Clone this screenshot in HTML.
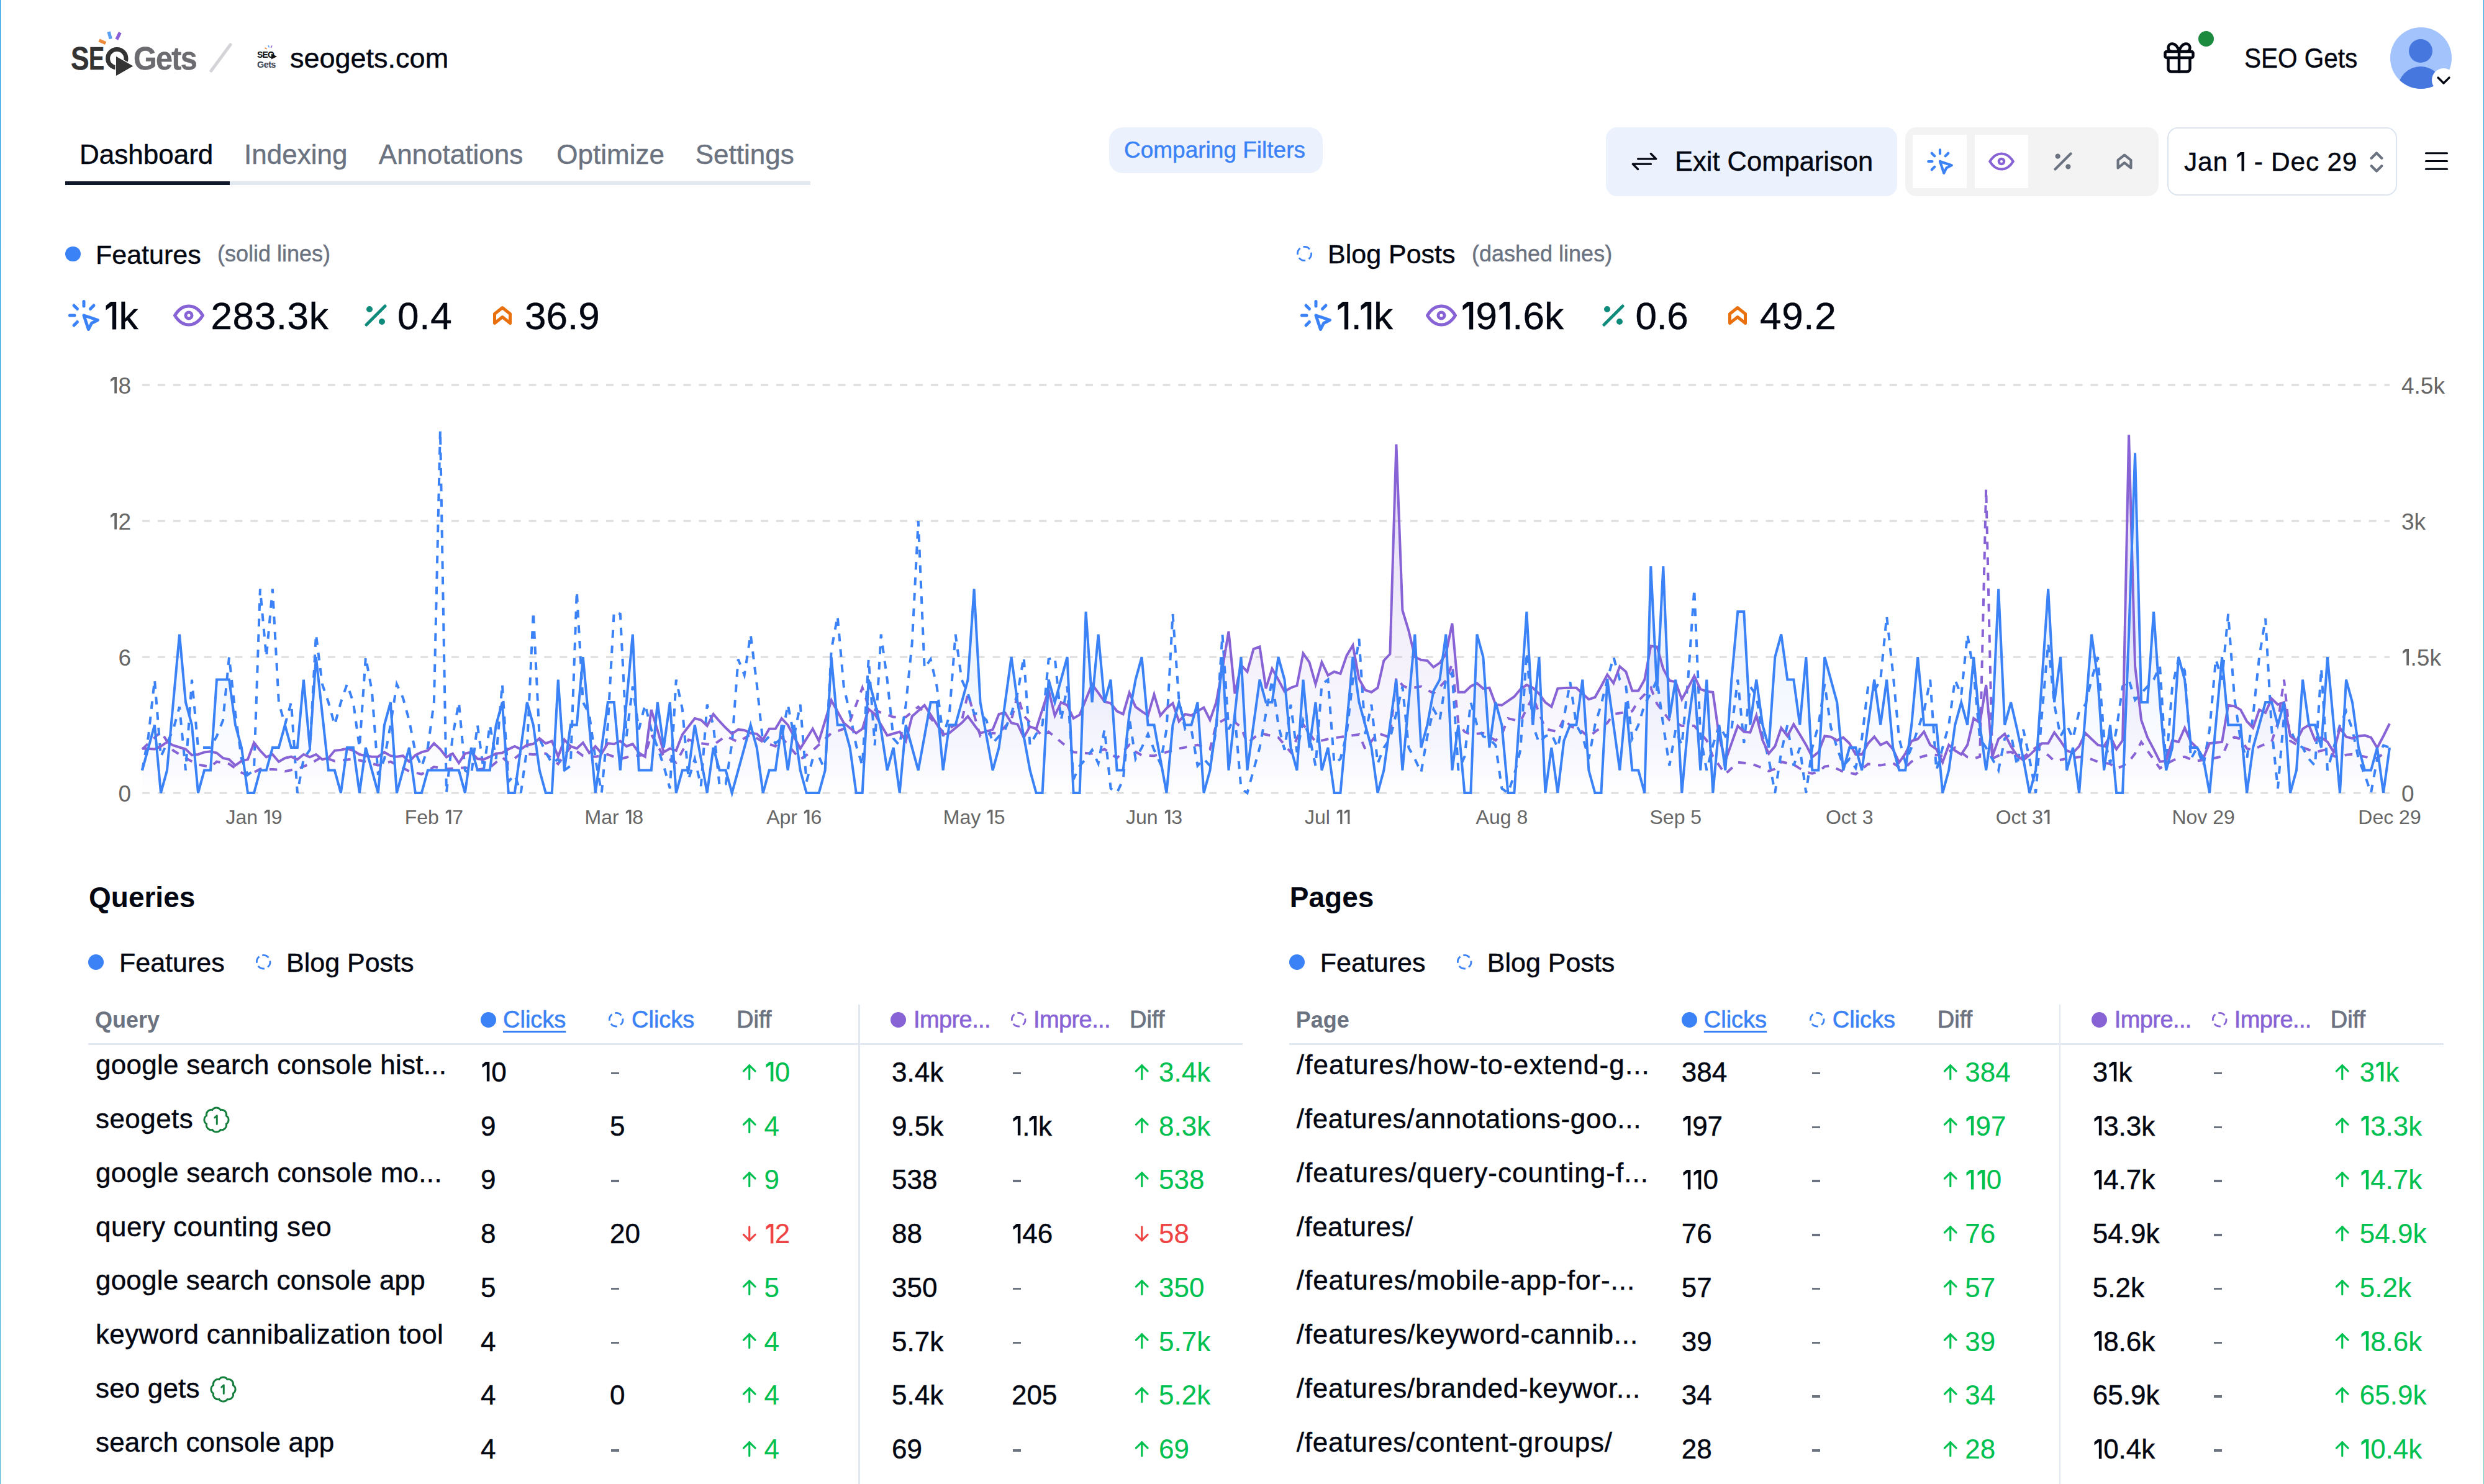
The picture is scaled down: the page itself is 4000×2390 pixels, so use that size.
<!DOCTYPE html>
<html><head><meta charset="utf-8"><title>SEO Gets Dashboard</title>
<style>
html,body{margin:0;padding:0;background:#fff;}
body{width:4000px;height:2390px;position:relative;overflow:hidden;font-family:"Liberation Sans", sans-serif;}
.t{position:absolute;white-space:pre;-webkit-text-stroke:0.45px currentColor;}
</style></head><body>
<div style="position:absolute;left:0;top:0;width:1.3px;height:2390px;background:linear-gradient(#0a93e6,#1aa0dc 50%,#45b5d5)"></div>
<div style="position:absolute;left:3998.7px;top:0;width:1.3px;height:2390px;background:linear-gradient(#1a9fe0,#3bb3d0 50%,#6ecac0)"></div>
<div class="t" style="left:114.0px;top:69.4px;font-size:51px;line-height:51px;color:#333333;font-weight:700;letter-spacing:0px;transform:scaleX(0.87);transform-origin:0 0">S</div>
<div class="t" style="left:143.0px;top:69.4px;font-size:51px;line-height:51px;color:#333333;font-weight:700;letter-spacing:0px;transform:scaleX(0.74);transform-origin:0 0">E</div>
<svg style="position:absolute;left:160.0px;top:40.0px;overflow:visible;" width="70" height="90" viewBox="0 0 70 90">
<circle cx="28.3" cy="54.2" r="14.7" fill="none" stroke="#333" stroke-width="7"/>
<path d="M26.2 49.6 L55.8 66.4 L26.2 83.3 Z" fill="#333" stroke="#fff" stroke-width="1.5" stroke-linejoin="round"/>
<line x1="-0.4" y1="24.8" x2="10.2" y2="29.7" stroke="#ee8a3c" stroke-width="5.3" stroke-linecap="butt"/>
<line x1="15.1" y1="11.1" x2="18.2" y2="22.6" stroke="#5aa0f8" stroke-width="5.3" stroke-linecap="butt"/>
<line x1="33.3" y1="12.4" x2="27.9" y2="23.5" stroke="#8a5fd8" stroke-width="5.3" stroke-linecap="butt"/>
</svg>
<div class="t" style="left:215.0px;top:69.4px;font-size:51px;line-height:51px;color:#6b6b70;font-weight:700;letter-spacing:-1.8px;transform:scaleX(0.95);transform-origin:0 0">Gets</div>
<svg style="position:absolute;left:330.0px;top:60.0px;overflow:visible;" width="60" height="70" viewBox="0 0 60 70"><line x1="10" y1="54" x2="41" y2="12" stroke="#d4d4d8" stroke-width="5" stroke-linecap="round"/></svg>
<div class="t" style="left:414.0px;top:81.1px;font-size:14px;line-height:14px;color:#111;font-weight:700;letter-spacing:-0.8px;-webkit-text-stroke:0">SEO</div>
<div class="t" style="left:414.0px;top:96.5px;font-size:14.5px;line-height:14.5px;color:#3f4450;font-weight:700;letter-spacing:-0.6px;-webkit-text-stroke:0">Gets</div>
<svg style="position:absolute;left:405.0px;top:65.0px;overflow:visible;" width="50" height="50" viewBox="0 0 50 50"><path d="M32 21.5 L41 26 L32 30.5Z" fill="#111"/><line x1="21.5" y1="12" x2="24.5" y2="14" stroke="#ee8a3c" stroke-width="1.6"/><line x1="27" y1="8" x2="28.5" y2="11.5" stroke="#5aa0f8" stroke-width="1.6"/><line x1="33" y1="8.5" x2="31.5" y2="12" stroke="#8a5fd8" stroke-width="1.6"/></svg>
<div class="t" style="left:467.0px;top:71.4px;font-size:45px;line-height:45px;color:#030712;font-weight:400;letter-spacing:0px;">seogets.com</div>
<svg style="position:absolute;left:3478.5px;top:63.0px;overflow:visible;" width="60" height="60" viewBox="0 0 24 24"><g fill="none" stroke="#030712" stroke-width="1.8" stroke-linecap="round" stroke-linejoin="round"><path d="M3 9a1 1 0 0 1 1 -1h16a1 1 0 0 1 1 1v2a1 1 0 0 1 -1 1h-16a1 1 0 0 1 -1 -1z"/><path d="M12 8l0 13"/><path d="M19 12v7a2 2 0 0 1 -2 2h-10a2 2 0 0 1 -2 -2v-7"/><path d="M7.5 8a2.5 2.5 0 0 1 0 -5a4.8 8 0 0 1 4.5 5a4.8 8 0 0 1 4.5 -5a2.5 2.5 0 0 1 0 5"/></g></svg>
<div style="position:absolute;left:3539.5px;top:49.5px;width:25.0px;height:25.0px;border-radius:50%;background:#1b8a3f"></div>
<div class="t" style="left:3614.0px;top:70.9px;font-size:45px;line-height:45px;color:#030712;font-weight:400;letter-spacing:0px;transform:scaleX(0.9);transform-origin:0 0">SEO Gets</div>
<svg style="position:absolute;left:3849.0px;top:43.5px;overflow:visible;" width="100" height="100" viewBox="0 0 100 100">
<defs><clipPath id="av"><circle cx="49.5" cy="49.5" r="49.5"/></clipPath></defs>
<circle cx="49.5" cy="49.5" r="49.5" fill="#a3c3fd"/>
<g clip-path="url(#av)"><circle cx="49" cy="38" r="19" fill="#4677df"/><ellipse cx="49" cy="98" rx="36" ry="35" fill="#4677df"/></g>
<circle cx="86" cy="85" r="19" fill="#fff"/>
<path d="M77 81 L86 90 L95 81" fill="none" stroke="#030712" stroke-width="3.2" stroke-linecap="round" stroke-linejoin="round"/>
</svg>
<div class="t" style="left:128.0px;top:226.7px;font-size:44px;line-height:44px;color:#030712;font-weight:400;letter-spacing:0px;">Dashboard</div>
<div class="t" style="left:393.0px;top:226.7px;font-size:44px;line-height:44px;color:#6b7280;font-weight:400;letter-spacing:0px;">Indexing</div>
<div class="t" style="left:609.8px;top:226.7px;font-size:44px;line-height:44px;color:#6b7280;font-weight:400;letter-spacing:0px;">Annotations</div>
<div class="t" style="left:896.3px;top:226.7px;font-size:44px;line-height:44px;color:#6b7280;font-weight:400;letter-spacing:0px;">Optimize</div>
<div class="t" style="left:1119.7px;top:226.7px;font-size:44px;line-height:44px;color:#6b7280;font-weight:400;letter-spacing:0px;">Settings</div>
<div style="position:absolute;left:105.0px;top:291.5px;width:1200.3px;height:6.0px;background:#e2e8f0;"></div>
<div style="position:absolute;left:105.0px;top:291.5px;width:265.0px;height:6.0px;background:#0f172a;"></div>
<div style="position:absolute;left:1786.0px;top:204.5px;width:344.0px;height:74.5px;background:#ebf2fd;border-radius:22px"></div>
<div class="t" style="left:1810.0px;top:223.2px;font-size:37px;line-height:37px;color:#3b82f6;font-weight:400;letter-spacing:0px;">Comparing Filters</div>
<div style="position:absolute;left:2585.8px;top:204.5px;width:469.2px;height:111.0px;background:#ebf1fd;border-radius:18px"></div>
<svg style="position:absolute;left:2623.3px;top:235.0px;overflow:visible;" width="50" height="50" viewBox="0 0 24 24"><g fill="none" stroke="#030712" stroke-width="1.6" stroke-linecap="round" stroke-linejoin="round"><path d="M7 10h14l-4 -4"/><path d="M17 14h-14l4 4"/></g></svg>
<div class="t" style="left:2697.0px;top:239.4px;font-size:43.5px;line-height:43.5px;color:#030712;font-weight:400;letter-spacing:0px;">Exit Comparison</div>
<div style="position:absolute;left:3067.5px;top:204.5px;width:408.8px;height:111.0px;background:#f3f3f4;border-radius:18px"></div>
<div style="position:absolute;left:3080.0px;top:217.0px;width:87.0px;height:86.0px;background:#ffffff;"></div>
<div style="position:absolute;left:3179.5px;top:217.0px;width:86.2px;height:86.0px;background:#ffffff;"></div>
<svg style="position:absolute;left:3098.5px;top:235.0px;overflow:visible;" width="50" height="50" viewBox="0 0 24 24"><g fill="none" stroke="#3b82f6" stroke-width="2" stroke-linecap="round" stroke-linejoin="round"><path d="M3 12l3 0"/><path d="M12 3l0 3"/><path d="M7.8 7.8l-2.2 -2.2"/><path d="M16.2 7.8l2.2 -2.2"/><path d="M7.8 16.2l-2.2 2.2"/><path d="M12 12l9 3l-4 2l-2 4l-3 -9"/></g></svg>
<svg style="position:absolute;left:3197.6px;top:235.0px;overflow:visible;" width="50" height="50" viewBox="0 0 24 24"><g fill="none" stroke="#8763d5" stroke-width="2" stroke-linecap="round" stroke-linejoin="round"><path d="M10 12a2 2 0 1 0 4 0a2 2 0 0 0 -4 0"/><path d="M21 12c-2.4 4 -5.4 6 -9 6c-3.6 0 -6.6 -2 -9 -6c2.4 -4 5.4 -6 9 -6c3.6 0 6.6 2 9 6"/></g></svg>
<svg style="position:absolute;left:3297.0px;top:235.0px;overflow:visible;" width="50" height="50" viewBox="0 0 24 24"><g fill="none" stroke="#6b7280" stroke-width="2" stroke-linecap="round" stroke-linejoin="round"><path d="M6 18l12 -12"/><circle cx="8" cy="8" r="1" fill="#6b7280"/><circle cx="16" cy="16" r="1" fill="#6b7280"/></g></svg>
<svg style="position:absolute;left:3396.0px;top:235.0px;overflow:visible;" width="50" height="50" viewBox="0 0 24 24"><g fill="none" stroke="#6b7280" stroke-width="2" stroke-linecap="round" stroke-linejoin="round"><path d="M17 11v6l-5 -4l-5 4v-6l5 -4z"/></g></svg>
<div style="position:absolute;left:3489.5px;top:205px;width:370.75px;height:110px;box-sizing:border-box;border:2.5px solid #dde5ef;border-radius:17px;background:#fff"></div>
<div class="t" style="left:3517.0px;top:240.3px;font-size:42.5px;line-height:42.5px;color:#030712;font-weight:400;letter-spacing:0.75px;">Jan <svg width="16.74" height="30.43" style="vertical-align:baseline;overflow:visible"><polygon points="7.75,0.00 13.85,0.00 13.85,30.43 9.51,30.43 9.51,4.26 2.43,9.25 2.43,4.26" fill="currentColor"/></svg> - Dec 29</div>
<svg style="position:absolute;left:3802.3px;top:236.3px;overflow:visible;" width="50" height="50" viewBox="0 0 24 24"><g fill="none" stroke="#6b7280" stroke-width="2" stroke-linecap="round" stroke-linejoin="round"><path d="M8 9l4 -4l4 4"/><path d="M16 15l-4 4l-4 -4"/></g></svg>
<svg style="position:absolute;left:3898.0px;top:234.2px;overflow:visible;" width="51" height="51" viewBox="0 0 24 24"><g fill="none" stroke="#030712" stroke-width="1.5" stroke-linecap="round" stroke-linejoin="round"><path d="M4 6l16 0"/><path d="M4 12l16 0"/><path d="M4 18l16 0"/></g></svg>
<div style="position:absolute;left:105.0px;top:396.7px;width:24.6px;height:24.6px;border-radius:50%;background:#3b82f6"></div>
<div class="t" style="left:154.0px;top:389.1px;font-size:43px;line-height:43px;color:#030712;font-weight:400;letter-spacing:0px;">Features</div>
<div class="t" style="left:350.0px;top:390.5px;font-size:36px;line-height:36px;color:#6b7280;font-weight:400;letter-spacing:0px;">(solid lines)</div>
<svg style="position:absolute;left:2084.7px;top:393.2px;overflow:visible;" width="31.0" height="31.0" viewBox="0 0 31.0 31.0"><circle cx="15.5" cy="15.5" r="11.1" fill="none" stroke="#3b82f6" stroke-width="2.8" stroke-dasharray="11.51 5.93" transform="rotate(-100 15.5 15.5)"/></svg>
<div class="t" style="left:2138.0px;top:388.1px;font-size:43px;line-height:43px;color:#030712;font-weight:400;letter-spacing:0px;">Blog Posts</div>
<div class="t" style="left:2370.0px;top:390.5px;font-size:36px;line-height:36px;color:#6b7280;font-weight:400;letter-spacing:0px;">(dashed lines)</div>
<svg style="position:absolute;left:105.0px;top:477.5px;overflow:visible;" width="60" height="60" viewBox="0 0 24 24"><g fill="none" stroke="#3b82f6" stroke-width="2" stroke-linecap="round" stroke-linejoin="round"><path d="M3 12l3 0"/><path d="M12 3l0 3"/><path d="M7.8 7.8l-2.2 -2.2"/><path d="M16.2 7.8l2.2 -2.2"/><path d="M7.8 16.2l-2.2 2.2"/><path d="M12 12l9 3l-4 2l-2 4l-3 -9"/></g></svg>
<div class="t" style="left:167.0px;top:478.0px;font-size:62px;line-height:62px;color:#030712;font-weight:400;letter-spacing:0px;"><svg width="24.42" height="44.39" style="vertical-align:baseline;overflow:visible"><polygon points="11.31,0.00 20.20,0.00 20.20,44.39 13.87,44.39 13.87,6.21 3.55,13.50 3.55,6.21" fill="currentColor"/></svg>k</div>
<svg style="position:absolute;left:274.0px;top:477.5px;overflow:visible;" width="60" height="60" viewBox="0 0 24 24"><g fill="none" stroke="#8763d5" stroke-width="2" stroke-linecap="round" stroke-linejoin="round"><path d="M10 12a2 2 0 1 0 4 0a2 2 0 0 0 -4 0"/><path d="M21 12c-2.4 4 -5.4 6 -9 6c-3.6 0 -6.6 -2 -9 -6c2.4 -4 5.4 -6 9 -6c3.6 0 6.6 2 9 6"/></g></svg>
<div class="t" style="left:339.5px;top:478.0px;font-size:62px;line-height:62px;color:#030712;font-weight:400;letter-spacing:0.6px;">283.3k</div>
<svg style="position:absolute;left:575.0px;top:477.5px;overflow:visible;" width="60" height="60" viewBox="0 0 24 24"><g fill="none" stroke="#0f8b7c" stroke-width="2" stroke-linecap="round" stroke-linejoin="round"><path d="M6 18l12 -12"/><circle cx="8" cy="8" r="1" fill="#0f8b7c"/><circle cx="16" cy="16" r="1" fill="#0f8b7c"/></g></svg>
<div class="t" style="left:640.0px;top:478.0px;font-size:62px;line-height:62px;color:#030712;font-weight:400;letter-spacing:0.8px;">0.4</div>
<svg style="position:absolute;left:779.0px;top:478.0px;overflow:visible;" width="60" height="60" viewBox="0 0 24 24"><g fill="none" stroke="#e8700e" stroke-width="2" stroke-linecap="round" stroke-linejoin="round"><path d="M17 11v6l-5 -4l-5 4v-6l5 -4z"/></g></svg>
<div class="t" style="left:845.0px;top:478.0px;font-size:62px;line-height:62px;color:#030712;font-weight:400;letter-spacing:0px;">36.9</div>
<svg style="position:absolute;left:2089.0px;top:477.5px;overflow:visible;" width="60" height="60" viewBox="0 0 24 24"><g fill="none" stroke="#3b82f6" stroke-width="2" stroke-linecap="round" stroke-linejoin="round"><path d="M3 12l3 0"/><path d="M12 3l0 3"/><path d="M7.8 7.8l-2.2 -2.2"/><path d="M16.2 7.8l2.2 -2.2"/><path d="M7.8 16.2l-2.2 2.2"/><path d="M12 12l9 3l-4 2l-2 4l-3 -9"/></g></svg>
<div class="t" style="left:2151.0px;top:478.0px;font-size:62px;line-height:62px;color:#030712;font-weight:400;letter-spacing:-5px;"><svg width="24.42" height="44.39" style="vertical-align:baseline;overflow:visible"><polygon points="11.31,0.00 20.20,0.00 20.20,44.39 13.87,44.39 13.87,6.21 3.55,13.50 3.55,6.21" fill="currentColor"/></svg>.<svg width="24.42" height="44.39" style="vertical-align:baseline;overflow:visible"><polygon points="11.31,0.00 20.20,0.00 20.20,44.39 13.87,44.39 13.87,6.21 3.55,13.50 3.55,6.21" fill="currentColor"/></svg>k</div>
<svg style="position:absolute;left:2290.5px;top:477.5px;overflow:visible;" width="60" height="60" viewBox="0 0 24 24"><g fill="none" stroke="#8763d5" stroke-width="2" stroke-linecap="round" stroke-linejoin="round"><path d="M10 12a2 2 0 1 0 4 0a2 2 0 0 0 -4 0"/><path d="M21 12c-2.4 4 -5.4 6 -9 6c-3.6 0 -6.6 -2 -9 -6c2.4 -4 5.4 -6 9 -6c3.6 0 6.6 2 9 6"/></g></svg>
<div class="t" style="left:2352.0px;top:478.0px;font-size:62px;line-height:62px;color:#030712;font-weight:400;letter-spacing:0px;"><svg width="24.42" height="44.39" style="vertical-align:baseline;overflow:visible"><polygon points="11.31,0.00 20.20,0.00 20.20,44.39 13.87,44.39 13.87,6.21 3.55,13.50 3.55,6.21" fill="currentColor"/></svg>9<svg width="24.42" height="44.39" style="vertical-align:baseline;overflow:visible"><polygon points="11.31,0.00 20.20,0.00 20.20,44.39 13.87,44.39 13.87,6.21 3.55,13.50 3.55,6.21" fill="currentColor"/></svg>.6k</div>
<svg style="position:absolute;left:2567.5px;top:477.5px;overflow:visible;" width="60" height="60" viewBox="0 0 24 24"><g fill="none" stroke="#0f8b7c" stroke-width="2" stroke-linecap="round" stroke-linejoin="round"><path d="M6 18l12 -12"/><circle cx="8" cy="8" r="1" fill="#0f8b7c"/><circle cx="16" cy="16" r="1" fill="#0f8b7c"/></g></svg>
<div class="t" style="left:2633.5px;top:478.0px;font-size:62px;line-height:62px;color:#030712;font-weight:400;letter-spacing:-0.5px;">0.6</div>
<svg style="position:absolute;left:2767.6px;top:478.0px;overflow:visible;" width="60" height="60" viewBox="0 0 24 24"><g fill="none" stroke="#e8700e" stroke-width="2" stroke-linecap="round" stroke-linejoin="round"><path d="M17 11v6l-5 -4l-5 4v-6l5 -4z"/></g></svg>
<div class="t" style="left:2834.0px;top:478.0px;font-size:62px;line-height:62px;color:#030712;font-weight:400;letter-spacing:0.7px;">49.2</div>
<div class="t" style="left:0;width:211px;text-align:right;top:602.7px;font-size:37px;line-height:37px;color:#666;-webkit-text-stroke:0"><svg width="14.57" height="26.49" style="vertical-align:baseline;overflow:visible"><polygon points="6.75,0.00 12.05,0.00 12.05,26.49 8.28,26.49 8.28,3.71 2.12,8.05 2.12,3.71" fill="currentColor"/></svg>8</div>
<div class="t" style="left:3867.0px;top:602.7px;font-size:37px;line-height:37px;color:#666;font-weight:400;letter-spacing:0px;-webkit-text-stroke:0">4.5k</div>
<div class="t" style="left:0;width:211px;text-align:right;top:821.7px;font-size:37px;line-height:37px;color:#666;-webkit-text-stroke:0"><svg width="14.57" height="26.49" style="vertical-align:baseline;overflow:visible"><polygon points="6.75,0.00 12.05,0.00 12.05,26.49 8.28,26.49 8.28,3.71 2.12,8.05 2.12,3.71" fill="currentColor"/></svg>2</div>
<div class="t" style="left:3867.0px;top:821.7px;font-size:37px;line-height:37px;color:#666;font-weight:400;letter-spacing:0px;-webkit-text-stroke:0">3k</div>
<div class="t" style="left:0;width:211px;text-align:right;top:1040.7px;font-size:37px;line-height:37px;color:#666;-webkit-text-stroke:0">6</div>
<div class="t" style="left:3867.0px;top:1040.7px;font-size:37px;line-height:37px;color:#666;font-weight:400;letter-spacing:0px;-webkit-text-stroke:0"><svg width="14.57" height="26.49" style="vertical-align:baseline;overflow:visible"><polygon points="6.75,0.00 12.05,0.00 12.05,26.49 8.28,26.49 8.28,3.71 2.12,8.05 2.12,3.71" fill="currentColor"/></svg>.5k</div>
<div class="t" style="left:0;width:211px;text-align:right;top:1259.8px;font-size:37px;line-height:37px;color:#666;-webkit-text-stroke:0">0</div>
<div class="t" style="left:3867.0px;top:1259.8px;font-size:37px;line-height:37px;color:#666;font-weight:400;letter-spacing:0px;-webkit-text-stroke:0">0</div>
<div class="t" style="left:309.0px;width:200px;text-align:center;top:1299.9px;font-size:32px;line-height:32px;color:#666;-webkit-text-stroke:0">Jan <svg width="12.60" height="22.91" style="vertical-align:baseline;overflow:visible"><polygon points="5.84,0.00 10.42,0.00 10.42,22.91 7.16,22.91 7.16,3.21 1.83,6.97 1.83,3.21" fill="currentColor"/></svg>9</div>
<div class="t" style="left:598.9px;width:200px;text-align:center;top:1299.9px;font-size:32px;line-height:32px;color:#666;-webkit-text-stroke:0">Feb <svg width="12.60" height="22.91" style="vertical-align:baseline;overflow:visible"><polygon points="5.84,0.00 10.42,0.00 10.42,22.91 7.16,22.91 7.16,3.21 1.83,6.97 1.83,3.21" fill="currentColor"/></svg>7</div>
<div class="t" style="left:888.8px;width:200px;text-align:center;top:1299.9px;font-size:32px;line-height:32px;color:#666;-webkit-text-stroke:0">Mar <svg width="12.60" height="22.91" style="vertical-align:baseline;overflow:visible"><polygon points="5.84,0.00 10.42,0.00 10.42,22.91 7.16,22.91 7.16,3.21 1.83,6.97 1.83,3.21" fill="currentColor"/></svg>8</div>
<div class="t" style="left:1178.7px;width:200px;text-align:center;top:1299.9px;font-size:32px;line-height:32px;color:#666;-webkit-text-stroke:0">Apr <svg width="12.60" height="22.91" style="vertical-align:baseline;overflow:visible"><polygon points="5.84,0.00 10.42,0.00 10.42,22.91 7.16,22.91 7.16,3.21 1.83,6.97 1.83,3.21" fill="currentColor"/></svg>6</div>
<div class="t" style="left:1468.6px;width:200px;text-align:center;top:1299.9px;font-size:32px;line-height:32px;color:#666;-webkit-text-stroke:0">May <svg width="12.60" height="22.91" style="vertical-align:baseline;overflow:visible"><polygon points="5.84,0.00 10.42,0.00 10.42,22.91 7.16,22.91 7.16,3.21 1.83,6.97 1.83,3.21" fill="currentColor"/></svg>5</div>
<div class="t" style="left:1758.5px;width:200px;text-align:center;top:1299.9px;font-size:32px;line-height:32px;color:#666;-webkit-text-stroke:0">Jun <svg width="12.60" height="22.91" style="vertical-align:baseline;overflow:visible"><polygon points="5.84,0.00 10.42,0.00 10.42,22.91 7.16,22.91 7.16,3.21 1.83,6.97 1.83,3.21" fill="currentColor"/></svg>3</div>
<div class="t" style="left:2038.5px;width:200px;text-align:center;top:1299.9px;font-size:32px;line-height:32px;color:#666;-webkit-text-stroke:0">Jul <svg width="12.60" height="22.91" style="vertical-align:baseline;overflow:visible"><polygon points="5.84,0.00 10.42,0.00 10.42,22.91 7.16,22.91 7.16,3.21 1.83,6.97 1.83,3.21" fill="currentColor"/></svg><svg width="12.60" height="22.91" style="vertical-align:baseline;overflow:visible"><polygon points="5.84,0.00 10.42,0.00 10.42,22.91 7.16,22.91 7.16,3.21 1.83,6.97 1.83,3.21" fill="currentColor"/></svg></div>
<div class="t" style="left:2318.4px;width:200px;text-align:center;top:1299.9px;font-size:32px;line-height:32px;color:#666;-webkit-text-stroke:0">Aug 8</div>
<div class="t" style="left:2598.3px;width:200px;text-align:center;top:1299.9px;font-size:32px;line-height:32px;color:#666;-webkit-text-stroke:0">Sep 5</div>
<div class="t" style="left:2878.2px;width:200px;text-align:center;top:1299.9px;font-size:32px;line-height:32px;color:#666;-webkit-text-stroke:0">Oct 3</div>
<div class="t" style="left:3158.2px;width:200px;text-align:center;top:1299.9px;font-size:32px;line-height:32px;color:#666;-webkit-text-stroke:0">Oct 3<svg width="12.60" height="22.91" style="vertical-align:baseline;overflow:visible"><polygon points="5.84,0.00 10.42,0.00 10.42,22.91 7.16,22.91 7.16,3.21 1.83,6.97 1.83,3.21" fill="currentColor"/></svg></div>
<div class="t" style="left:3448.1px;width:200px;text-align:center;top:1299.9px;font-size:32px;line-height:32px;color:#666;-webkit-text-stroke:0">Nov 29</div>
<div class="t" style="left:3748px;width:200px;text-align:center;top:1299.9px;font-size:32px;line-height:32px;color:#666;-webkit-text-stroke:0">Dec 29</div>
<svg style="position:absolute;left:0;top:0" width="4000" height="2390"><defs><linearGradient id="gb" x1="0" y1="0" x2="0" y2="1"><stop offset="0" stop-color="#3b82f6" stop-opacity="0.2"/><stop offset="1" stop-color="#3b82f6" stop-opacity="0.0"/></linearGradient><linearGradient id="gp" x1="0" y1="0" x2="0" y2="1"><stop offset="0" stop-color="#8763d5" stop-opacity="0.24"/><stop offset="1" stop-color="#8763d5" stop-opacity="0.0"/></linearGradient></defs><line x1="229" y1="1277.1" x2="3848" y2="1277.1" stroke="#dcdcdc" stroke-width="2.8" stroke-dasharray="12 12.9"/><line x1="229" y1="1058.1" x2="3848" y2="1058.1" stroke="#dcdcdc" stroke-width="2.8" stroke-dasharray="12 12.9"/><line x1="229" y1="839.0" x2="3848" y2="839.0" stroke="#dcdcdc" stroke-width="2.8" stroke-dasharray="12 12.9"/><line x1="229" y1="620.0" x2="3848" y2="620.0" stroke="#dcdcdc" stroke-width="2.8" stroke-dasharray="12 12.9"/><path d="M229.0 1240.6 L239.0 1204.1 L249.0 1167.6 L259.0 1277.1 L269.0 1240.6 L279.0 1131.1 L289.0 1021.6 L299.0 1131.1 L309.0 1167.6 L319.0 1277.1 L329.0 1240.6 L339.0 1240.6 L349.0 1094.6 L359.0 1094.6 L369.0 1094.6 L379.0 1167.6 L389.0 1204.1 L399.0 1277.1 L409.0 1277.1 L418.9 1240.6 L428.9 1240.6 L438.9 1204.1 L448.9 1204.1 L458.9 1167.6 L468.9 1204.1 L478.9 1204.1 L488.9 1094.6 L498.9 1204.1 L508.9 1058.1 L518.9 1149.3 L528.9 1240.6 L538.9 1240.6 L548.9 1277.1 L558.9 1204.1 L568.9 1204.1 L578.9 1277.1 L588.9 1204.1 L598.9 1240.6 L608.9 1277.1 L618.9 1167.6 L628.9 1131.1 L638.9 1277.1 L648.9 1240.6 L658.9 1204.1 L668.9 1277.1 L678.9 1277.1 L688.9 1240.6 L698.9 1240.6 L708.9 1240.6 L718.9 1240.6 L728.9 1240.6 L738.9 1240.6 L748.9 1277.1 L758.9 1204.1 L768.9 1240.6 L778.8 1240.6 L788.8 1240.6 L798.8 1167.6 L808.8 1131.1 L818.8 1277.1 L828.8 1277.1 L838.8 1204.1 L848.8 1131.1 L858.8 1167.6 L868.8 1240.6 L878.8 1277.1 L888.8 1277.1 L898.8 1094.6 L908.8 1240.6 L918.8 1167.6 L928.8 1167.6 L938.8 1058.1 L948.8 1167.6 L958.8 1277.1 L968.8 1204.1 L978.8 1131.1 L988.8 1131.1 L998.8 1240.6 L1008.8 1131.1 L1018.8 1021.6 L1028.8 1240.6 L1038.8 1240.6 L1048.8 1240.6 L1058.8 1131.1 L1068.8 1204.1 L1078.8 1131.1 L1088.8 1277.1 L1098.8 1240.6 L1108.8 1240.6 L1118.8 1167.6 L1128.8 1222.3 L1138.7 1277.1 L1148.7 1204.1 L1158.7 1240.6 L1168.7 1240.6 L1178.7 1277.1 L1188.7 1240.6 L1198.7 1204.1 L1208.7 1167.6 L1218.7 1204.1 L1228.7 1277.1 L1238.7 1240.6 L1248.7 1240.6 L1258.7 1167.6 L1268.7 1240.6 L1278.7 1167.6 L1288.7 1240.6 L1298.7 1277.1 L1308.7 1277.1 L1318.7 1277.1 L1328.7 1240.6 L1338.7 1058.1 L1348.7 1167.6 L1358.7 1167.6 L1368.7 1204.1 L1378.7 1277.1 L1388.7 1277.1 L1398.7 1094.6 L1408.7 1131.1 L1418.7 1174.9 L1428.7 1240.6 L1438.7 1204.1 L1448.7 1277.1 L1458.7 1167.6 L1468.7 1204.1 L1478.7 1240.6 L1488.7 1185.8 L1498.6 1131.1 L1508.6 1131.1 L1518.6 1240.6 L1528.6 1167.6 L1538.6 1167.6 L1548.6 1131.1 L1558.6 1094.6 L1568.6 948.5 L1578.6 1131.1 L1588.6 1185.8 L1598.6 1240.6 L1608.6 1204.1 L1618.6 1131.1 L1628.6 1058.1 L1638.6 1131.1 L1648.6 1185.8 L1658.6 1240.6 L1668.6 1277.1 L1678.6 1277.1 L1688.6 1094.6 L1698.6 1131.1 L1708.6 1094.6 L1718.6 1058.1 L1728.6 1277.1 L1738.6 1277.1 L1748.6 985.1 L1758.6 1131.1 L1768.6 1021.6 L1778.6 1131.1 L1788.6 1094.6 L1798.6 1240.6 L1808.6 1240.6 L1818.6 1149.3 L1828.6 1094.6 L1838.6 1058.1 L1848.6 1167.6 L1858.5 1167.6 L1868.5 1222.3 L1878.5 1277.1 L1888.5 1167.6 L1898.5 1131.1 L1908.5 1167.6 L1918.5 1167.6 L1928.5 1131.1 L1938.5 1277.1 L1948.5 1240.6 L1958.5 1167.6 L1968.5 1058.1 L1978.5 1240.6 L1988.5 1149.3 L1998.5 1058.1 L2008.5 1240.6 L2018.5 1167.6 L2028.5 1094.6 L2038.5 1131.1 L2048.5 1131.1 L2058.5 1058.1 L2068.5 1094.6 L2078.5 1204.1 L2088.5 1240.6 L2098.5 1094.6 L2108.5 1204.1 L2118.5 1131.1 L2128.5 1240.6 L2138.5 1204.1 L2148.5 1277.1 L2158.5 1277.1 L2168.5 1167.6 L2178.5 1058.1 L2188.5 1131.1 L2198.5 1167.6 L2208.5 1204.1 L2218.5 1277.1 L2228.4 1240.6 L2238.4 1167.6 L2248.4 1094.6 L2258.4 1240.6 L2268.4 1131.1 L2278.4 1021.6 L2288.4 1204.1 L2298.4 1167.6 L2308.4 1112.8 L2318.4 1094.6 L2328.4 1021.6 L2338.4 1240.6 L2348.4 1167.6 L2358.4 1277.1 L2368.4 1277.1 L2378.4 1021.6 L2388.4 1058.1 L2398.4 1204.1 L2408.4 1131.1 L2418.4 1167.6 L2428.4 1277.1 L2438.4 1277.1 L2448.4 1131.1 L2458.4 985.1 L2468.4 1167.6 L2478.4 1058.1 L2488.4 1277.1 L2498.4 1204.1 L2508.4 1277.1 L2518.4 1193.1 L2528.4 1167.6 L2538.4 1167.6 L2548.4 1094.6 L2558.4 1240.6 L2568.4 1277.1 L2578.4 1277.1 L2588.3 1094.6 L2598.3 1167.6 L2608.3 1240.6 L2618.3 1131.1 L2628.3 1240.6 L2638.3 1240.6 L2648.3 1277.1 L2658.3 912.0 L2668.3 1112.8 L2678.3 912.0 L2688.3 1156.6 L2698.3 1094.6 L2708.3 1277.1 L2718.3 1167.6 L2728.3 1094.6 L2738.3 1240.6 L2748.3 1094.6 L2758.3 1277.1 L2768.3 1167.6 L2778.3 1240.6 L2788.3 1094.6 L2798.3 985.1 L2808.3 985.1 L2818.3 1167.6 L2828.3 1094.6 L2838.3 1167.6 L2848.3 1204.1 L2858.3 1058.1 L2868.3 1021.6 L2878.3 1094.6 L2888.3 1094.6 L2898.3 1167.6 L2908.3 1058.1 L2918.3 1240.6 L2928.3 1240.6 L2938.3 1058.1 L2948.2 1094.6 L2958.2 1131.1 L2968.2 1240.6 L2978.2 1204.1 L2988.2 1204.1 L2998.2 1240.6 L3008.2 1167.6 L3018.2 1094.6 L3028.2 1167.6 L3038.2 1094.6 L3048.2 1204.1 L3058.2 1240.6 L3068.2 1240.6 L3078.2 1167.6 L3088.2 1058.1 L3098.2 1167.6 L3108.2 1167.6 L3118.2 1167.6 L3128.2 1277.1 L3138.2 1240.6 L3148.2 1167.6 L3158.2 1131.1 L3168.2 1167.6 L3178.2 1058.1 L3188.2 1167.6 L3198.2 1240.6 L3208.2 1167.6 L3218.2 948.5 L3228.2 1167.6 L3238.2 1131.1 L3248.2 1174.9 L3258.2 1222.3 L3268.2 1277.1 L3278.2 1240.6 L3288.2 1094.6 L3298.2 948.5 L3308.1 1131.1 L3318.1 1058.1 L3328.1 1240.6 L3338.1 1204.1 L3348.1 1277.1 L3358.1 1149.3 L3368.1 1021.6 L3378.1 1094.6 L3388.1 1240.6 L3398.1 1167.6 L3408.1 1277.1 L3418.1 1277.1 L3428.1 1021.6 L3438.1 729.5 L3448.1 1131.1 L3458.1 1131.1 L3468.1 985.1 L3478.1 1131.1 L3488.1 1240.6 L3498.1 1204.1 L3508.1 1058.1 L3518.1 1094.6 L3528.1 1204.1 L3538.1 1204.1 L3548.1 1222.3 L3558.1 1277.1 L3568.1 1167.6 L3578.1 1058.1 L3588.1 1167.6 L3598.1 1167.6 L3608.1 1167.6 L3618.1 1277.1 L3628.1 1204.1 L3638.1 1167.6 L3648.1 1131.1 L3658.1 1131.1 L3668.0 1167.6 L3678.0 1131.1 L3688.0 1277.1 L3698.0 1240.6 L3708.0 1094.6 L3718.0 1167.6 L3728.0 1167.6 L3738.0 1204.1 L3748.0 1058.1 L3758.0 1167.6 L3768.0 1277.1 L3778.0 1094.6 L3788.0 1131.1 L3798.0 1204.1 L3808.0 1240.6 L3818.0 1240.6 L3828.0 1204.1 L3838.0 1277.1 L3848.0 1204.1 L3848 1277.1 L229 1277.1 Z" fill="url(#gb)"/><path d="M229.0 1205.5 L239.0 1206.1 L249.0 1206.6 L259.0 1201.9 L269.0 1195.0 L279.0 1200.4 L289.0 1203.5 L299.0 1206.6 L309.0 1216.1 L319.0 1215.0 L329.0 1211.4 L339.0 1210.3 L349.0 1212.5 L359.0 1220.9 L369.0 1223.1 L379.0 1232.6 L389.0 1225.6 L399.0 1223.1 L409.0 1196.1 L418.9 1208.8 L428.9 1219.4 L438.9 1215.0 L448.9 1226.7 L458.9 1220.9 L468.9 1218.7 L478.9 1223.1 L488.9 1215.0 L498.9 1219.4 L508.9 1215.0 L518.9 1223.1 L528.9 1220.9 L538.9 1208.8 L548.9 1207.7 L558.9 1205.5 L568.9 1208.8 L578.9 1215.0 L588.9 1217.2 L598.9 1218.7 L608.9 1218.7 L618.9 1211.4 L628.9 1217.2 L638.9 1218.7 L648.9 1217.2 L658.9 1226.7 L668.9 1216.1 L678.9 1211.4 L688.9 1208.8 L698.9 1197.2 L708.9 1206.6 L718.9 1219.4 L728.9 1213.6 L738.9 1228.9 L748.9 1213.6 L758.9 1211.4 L768.9 1222.0 L778.8 1223.1 L788.8 1218.7 L798.8 1213.6 L808.8 1212.5 L818.8 1206.6 L828.8 1201.9 L838.8 1206.6 L848.8 1199.7 L858.8 1198.2 L868.8 1189.1 L878.8 1197.2 L888.8 1193.5 L898.8 1218.7 L908.8 1191.3 L918.8 1201.9 L928.8 1205.5 L938.8 1196.1 L948.8 1212.5 L958.8 1201.9 L968.8 1213.6 L978.8 1197.2 L988.8 1198.2 L998.8 1193.5 L1008.8 1201.9 L1018.8 1198.2 L1028.8 1212.5 L1038.8 1218.7 L1048.8 1143.1 L1058.8 1176.0 L1068.8 1211.4 L1078.8 1205.5 L1088.8 1208.8 L1098.8 1182.9 L1108.8 1170.1 L1118.8 1157.0 L1128.8 1159.6 L1138.7 1169.0 L1148.7 1150.1 L1158.7 1161.7 L1168.7 1172.3 L1178.7 1181.8 L1188.7 1174.9 L1198.7 1176.0 L1208.7 1180.7 L1218.7 1181.8 L1228.7 1191.3 L1238.7 1173.8 L1248.7 1173.8 L1258.7 1157.0 L1268.7 1167.6 L1278.7 1186.6 L1288.7 1205.5 L1298.7 1189.7 L1308.7 1173.8 L1318.7 1193.5 L1328.7 1160.6 L1338.7 1127.8 L1348.7 1146.0 L1358.7 1164.3 L1368.7 1172.5 L1378.7 1180.7 L1388.7 1173.8 L1398.7 1142.0 L1408.7 1150.1 L1418.7 1167.2 L1428.7 1184.4 L1438.7 1181.5 L1448.7 1178.5 L1458.7 1193.5 L1468.7 1153.7 L1478.7 1144.8 L1488.7 1135.8 L1498.6 1151.2 L1508.6 1166.5 L1518.6 1182.9 L1528.6 1180.7 L1538.6 1172.5 L1548.6 1164.3 L1558.6 1153.7 L1568.6 1167.2 L1578.6 1180.7 L1588.6 1177.8 L1598.6 1174.9 L1608.6 1150.1 L1618.6 1147.9 L1628.6 1164.3 L1638.6 1166.5 L1648.6 1187.7 L1658.6 1170.1 L1668.6 1173.8 L1678.6 1142.6 L1688.6 1111.4 L1698.6 1152.6 L1708.6 1131.1 L1718.6 1135.8 L1728.6 1157.0 L1738.6 1151.2 L1748.6 1126.5 L1758.6 1101.9 L1768.6 1115.9 L1778.6 1130.0 L1788.6 1132.5 L1798.6 1145.3 L1808.6 1150.1 L1818.6 1115.7 L1828.6 1138.4 L1838.6 1145.7 L1848.6 1152.3 L1858.5 1118.3 L1868.5 1152.3 L1878.5 1140.6 L1888.5 1132.5 L1898.5 1161.7 L1908.5 1150.1 L1918.5 1152.3 L1928.5 1145.3 L1938.5 1139.5 L1948.5 1159.6 L1958.5 1131.1 L1968.5 1076.3 L1978.5 1016.8 L1988.5 1117.2 L1998.5 1071.2 L2008.5 1081.8 L2018.5 1045.3 L2028.5 1041.6 L2038.5 1108.8 L2048.5 1077.0 L2058.5 1094.6 L2068.5 1113.6 L2078.5 1107.7 L2088.5 1104.1 L2098.5 1052.2 L2108.5 1066.5 L2118.5 1101.9 L2128.5 1066.5 L2138.5 1087.6 L2148.5 1081.8 L2158.5 1085.1 L2168.5 1055.9 L2178.5 1039.4 L2188.5 1093.5 L2198.5 1111.4 L2208.5 1114.7 L2218.5 1107.7 L2228.4 1063.9 L2238.4 1053.3 L2248.4 715.6 L2258.4 982.9 L2268.4 1015.7 L2278.4 1058.1 L2288.4 1062.8 L2298.4 1063.9 L2308.4 1074.5 L2318.4 1067.6 L2328.4 1053.3 L2338.4 1004.0 L2348.4 1114.7 L2358.4 1114.7 L2368.4 1105.2 L2378.4 1100.4 L2388.4 1108.8 L2398.4 1107.7 L2408.4 1134.7 L2418.4 1135.8 L2428.4 1128.9 L2438.4 1122.0 L2448.4 1109.9 L2458.4 1103.0 L2468.4 1107.7 L2478.4 1117.2 L2488.4 1131.1 L2498.4 1138.4 L2508.4 1108.8 L2518.4 1108.1 L2528.4 1107.7 L2538.4 1107.7 L2548.4 1117.2 L2558.4 1126.3 L2568.4 1123.0 L2578.4 1105.2 L2588.3 1086.5 L2598.3 1100.4 L2608.3 1073.4 L2618.3 1081.8 L2628.3 1112.5 L2638.3 1112.5 L2648.3 1094.6 L2658.3 1040.5 L2668.3 1041.6 L2678.3 1077.0 L2688.3 1096.0 L2698.3 1098.2 L2708.3 1126.3 L2718.3 1107.7 L2728.3 1088.7 L2738.3 1109.9 L2748.3 1113.6 L2758.3 1114.7 L2768.3 1185.5 L2778.3 1225.6 L2788.3 1197.2 L2798.3 1169.0 L2808.3 1178.5 L2818.3 1179.6 L2828.3 1152.3 L2838.3 1192.4 L2848.3 1213.6 L2858.3 1201.9 L2868.3 1172.3 L2878.3 1185.5 L2888.3 1166.5 L2898.3 1182.9 L2908.3 1199.7 L2918.3 1219.4 L2928.3 1211.4 L2938.3 1185.5 L2948.2 1186.6 L2958.2 1192.4 L2968.2 1187.7 L2978.2 1197.2 L2988.2 1215.0 L2998.2 1215.0 L3008.2 1197.2 L3018.2 1186.6 L3028.2 1199.7 L3038.2 1195.0 L3048.2 1206.6 L3058.2 1227.8 L3068.2 1213.6 L3078.2 1193.5 L3088.2 1190.2 L3098.2 1178.5 L3108.2 1199.7 L3118.2 1206.6 L3128.2 1227.8 L3138.2 1199.7 L3148.2 1208.8 L3158.2 1215.0 L3168.2 1199.7 L3178.2 1157.0 L3188.2 1164.3 L3198.2 1103.0 L3208.2 1218.7 L3218.2 1190.2 L3228.2 1181.8 L3238.2 1201.9 L3248.2 1217.2 L3258.2 1224.2 L3268.2 1216.1 L3278.2 1206.6 L3288.2 1197.2 L3298.2 1197.2 L3308.1 1179.6 L3318.1 1193.5 L3328.1 1208.8 L3338.1 1212.5 L3348.1 1201.9 L3358.1 1180.7 L3368.1 1190.2 L3378.1 1199.7 L3388.1 1201.9 L3398.1 1185.5 L3408.1 1206.6 L3418.1 1192.4 L3428.1 700.3 L3438.1 1072.7 L3448.1 1159.6 L3458.1 1187.7 L3468.1 1206.6 L3478.1 1226.7 L3488.1 1225.6 L3498.1 1192.4 L3508.1 1195.0 L3518.1 1172.3 L3528.1 1195.0 L3538.1 1204.5 L3548.1 1220.9 L3558.1 1197.2 L3568.1 1196.1 L3578.1 1195.0 L3588.1 1135.8 L3598.1 1137.3 L3608.1 1143.1 L3618.1 1161.7 L3628.1 1172.3 L3638.1 1143.1 L3648.1 1147.9 L3658.1 1125.2 L3668.0 1134.7 L3678.0 1131.1 L3688.0 1185.5 L3698.0 1193.5 L3708.0 1173.8 L3718.0 1167.6 L3728.0 1192.4 L3738.0 1187.7 L3748.0 1195.0 L3758.0 1211.4 L3768.0 1172.3 L3778.0 1186.6 L3788.0 1189.1 L3798.0 1185.5 L3808.0 1184.4 L3818.0 1187.7 L3828.0 1204.5 L3838.0 1185.5 L3848.0 1165.4 L3848 1277.1 L229 1277.1 Z" fill="url(#gp)"/><path d="M229.0 1206.6 L239.0 1197.3 L249.0 1187.9 L259.0 1178.5 L269.0 1193.7 L279.0 1208.8 L289.0 1214.9 L299.0 1220.9 L309.0 1226.2 L319.0 1231.5 L329.0 1233.3 L339.0 1235.1 L349.0 1226.7 L359.0 1228.5 L369.0 1230.4 L379.0 1237.3 L389.0 1244.2 L399.0 1249.0 L409.0 1243.7 L418.9 1238.4 L428.9 1238.8 L438.9 1239.1 L448.9 1239.5 L458.9 1242.1 L468.9 1240.2 L478.9 1238.4 L488.9 1234.4 L498.9 1230.4 L508.9 1224.5 L518.9 1218.7 L528.9 1222.2 L538.9 1225.6 L548.9 1224.5 L558.9 1223.4 L568.9 1222.3 L578.9 1224.5 L588.9 1226.7 L598.9 1229.6 L608.9 1232.6 L618.9 1229.6 L628.9 1226.7 L638.9 1231.8 L648.9 1236.9 L658.9 1242.1 L668.9 1244.4 L678.9 1246.8 L688.9 1241.0 L698.9 1235.1 L708.9 1236.8 L718.9 1238.4 L728.9 1237.7 L738.9 1236.9 L748.9 1236.2 L758.9 1237.9 L768.9 1239.5 L778.8 1237.9 L788.8 1236.2 L798.8 1227.8 L808.8 1219.4 L818.8 1228.9 L828.8 1221.2 L838.8 1213.6 L848.8 1214.3 L858.8 1215.0 L868.8 1214.3 L878.8 1213.6 L888.8 1222.0 L898.8 1230.4 L908.8 1216.7 L918.8 1203.0 L928.8 1210.1 L938.8 1217.2 L948.8 1218.0 L958.8 1218.7 L968.8 1216.9 L978.8 1215.0 L988.8 1218.7 L998.8 1222.3 L1008.8 1219.8 L1018.8 1217.2 L1028.8 1216.7 L1038.8 1216.1 L1048.8 1182.9 L1058.8 1200.8 L1068.8 1218.7 L1078.8 1223.3 L1088.8 1227.8 L1098.8 1209.6 L1108.8 1191.3 L1118.8 1194.2 L1128.8 1197.2 L1138.7 1198.4 L1148.7 1199.7 L1158.7 1192.6 L1168.7 1185.5 L1178.7 1190.2 L1188.7 1195.0 L1198.7 1188.9 L1208.7 1182.9 L1218.7 1188.9 L1228.7 1195.0 L1238.7 1198.4 L1248.7 1201.9 L1258.7 1187.7 L1268.7 1199.5 L1278.7 1211.3 L1288.7 1223.1 L1298.7 1216.0 L1308.7 1208.8 L1318.7 1199.5 L1328.7 1190.1 L1338.7 1180.7 L1348.7 1177.3 L1358.7 1173.8 L1368.7 1161.7 L1378.7 1134.7 L1388.7 1107.7 L1398.7 1138.4 L1408.7 1143.1 L1418.7 1147.9 L1428.7 1151.3 L1438.7 1154.8 L1448.7 1154.8 L1458.7 1154.8 L1468.7 1146.6 L1478.7 1138.4 L1488.7 1147.7 L1498.6 1157.0 L1508.6 1167.8 L1518.6 1178.5 L1528.6 1172.9 L1538.6 1167.3 L1548.6 1161.7 L1558.6 1117.2 L1568.6 1151.3 L1578.6 1185.5 L1588.6 1183.1 L1598.6 1180.7 L1608.6 1180.7 L1618.6 1170.1 L1628.6 1159.6 L1638.6 1119.4 L1648.6 1152.6 L1658.6 1163.6 L1668.6 1174.5 L1678.6 1185.5 L1688.6 1178.5 L1698.6 1186.7 L1708.6 1195.0 L1718.6 1203.2 L1728.6 1211.4 L1738.6 1212.1 L1748.6 1212.9 L1758.6 1213.6 L1768.6 1210.1 L1778.6 1206.6 L1788.6 1213.8 L1798.6 1220.9 L1808.6 1210.3 L1818.6 1199.7 L1828.6 1210.7 L1838.6 1216.4 L1848.6 1216.8 L1858.5 1217.2 L1868.5 1214.3 L1878.5 1211.4 L1888.5 1208.5 L1898.5 1205.5 L1908.5 1203.6 L1918.5 1201.7 L1928.5 1199.7 L1938.5 1203.2 L1948.5 1206.6 L1958.5 1166.5 L1968.5 1160.6 L1978.5 1154.8 L1988.5 1163.0 L1998.5 1171.2 L2008.5 1197.2 L2018.5 1188.9 L2028.5 1180.7 L2038.5 1183.0 L2048.5 1185.3 L2058.5 1187.7 L2068.5 1199.5 L2078.5 1211.4 L2088.5 1188.9 L2098.5 1166.5 L2108.5 1180.7 L2118.5 1195.0 L2128.5 1192.6 L2138.5 1190.2 L2148.5 1188.6 L2158.5 1187.1 L2168.5 1185.5 L2178.5 1184.2 L2188.5 1182.9 L2198.5 1206.6 L2208.5 1193.7 L2218.5 1180.7 L2228.4 1184.2 L2238.4 1187.7 L2248.4 1091.3 L2258.4 1103.7 L2268.4 1109.0 L2278.4 1107.3 L2288.4 1105.5 L2298.4 1111.0 L2308.4 1116.5 L2318.4 1106.3 L2328.4 1096.0 L2338.4 1069.0 L2348.4 1164.3 L2358.4 1178.5 L2368.4 1182.9 L2378.4 1181.8 L2388.4 1180.7 L2398.4 1186.6 L2408.4 1192.4 L2418.4 1182.9 L2428.4 1157.0 L2438.4 1159.4 L2448.4 1161.7 L2458.4 1141.8 L2468.4 1122.0 L2478.4 1147.9 L2488.4 1173.8 L2498.4 1176.2 L2508.4 1178.5 L2518.4 1157.0 L2528.4 1169.0 L2538.4 1173.8 L2548.4 1178.5 L2558.4 1187.7 L2568.4 1178.5 L2578.4 1171.4 L2588.3 1164.3 L2598.3 1150.1 L2608.3 1148.5 L2618.3 1146.9 L2628.3 1145.3 L2638.3 1128.9 L2648.3 1118.3 L2658.3 1107.7 L2668.3 1133.6 L2678.3 1146.6 L2688.3 1159.6 L2698.3 1164.3 L2708.3 1169.0 L2718.3 1169.0 L2728.3 1169.0 L2738.3 1180.7 L2748.3 1192.4 L2758.3 1218.3 L2768.3 1232.6 L2778.3 1246.8 L2788.3 1237.3 L2798.3 1227.8 L2808.3 1228.7 L2818.3 1229.6 L2828.3 1233.0 L2838.3 1237.1 L2848.3 1241.9 L2858.3 1238.4 L2868.3 1226.7 L2878.3 1229.1 L2888.3 1231.5 L2898.3 1237.6 L2908.3 1243.7 L2918.3 1245.6 L2928.3 1243.1 L2938.3 1234.6 L2948.2 1233.0 L2958.2 1238.3 L2968.2 1242.7 L2978.2 1244.7 L2988.2 1246.8 L2998.2 1238.6 L3008.2 1230.4 L3018.2 1231.5 L3028.2 1232.6 L3038.2 1230.7 L3048.2 1228.9 L3058.2 1235.5 L3068.2 1235.8 L3078.2 1226.6 L3088.2 1220.6 L3098.2 1217.8 L3108.2 1215.0 L3118.2 1216.1 L3128.2 1217.2 L3138.2 1210.7 L3148.2 1204.1 L3158.2 1211.7 L3168.2 1219.3 L3178.2 1221.6 L3188.2 1218.7 L3198.2 786.8 L3208.2 1222.0 L3218.2 1216.9 L3228.2 1211.9 L3238.2 1211.0 L3248.2 1216.5 L3258.2 1219.4 L3268.2 1211.7 L3278.2 1204.1 L3288.2 1209.7 L3298.2 1216.4 L3308.1 1225.6 L3318.1 1223.7 L3328.1 1221.8 L3338.1 1220.3 L3348.1 1219.2 L3358.1 1219.1 L3368.1 1222.9 L3378.1 1226.7 L3388.1 1228.5 L3398.1 1230.4 L3408.1 1238.0 L3418.1 1233.8 L3428.1 1226.6 L3438.1 1213.7 L3448.1 1195.0 L3458.1 1209.1 L3468.1 1223.2 L3478.1 1237.3 L3488.1 1230.4 L3498.1 1225.3 L3508.1 1220.3 L3518.1 1218.8 L3528.1 1222.8 L3538.1 1225.3 L3548.1 1224.0 L3558.1 1222.6 L3568.1 1220.5 L3578.1 1218.3 L3588.1 1195.0 L3598.1 1186.9 L3608.1 1190.4 L3618.1 1205.4 L3628.1 1208.1 L3638.1 1202.5 L3648.1 1198.0 L3658.1 1194.5 L3668.0 1164.5 L3678.0 1094.6 L3688.0 1193.1 L3698.0 1199.0 L3708.0 1203.8 L3718.0 1207.6 L3728.0 1211.4 L3738.0 1209.0 L3748.0 1206.6 L3758.0 1217.6 L3768.0 1220.6 L3778.0 1215.6 L3788.0 1214.8 L3798.0 1216.7 L3808.0 1218.8 L3818.0 1221.3 L3828.0 1220.9 L3838.0 1213.8 L3848.0 1206.6" fill="none" stroke="#8763d5" stroke-width="4.0" stroke-dasharray="12.5 12.5"/><path d="M229.0 1240.6 L239.0 1185.8 L249.0 1094.6 L259.0 1218.7 L269.0 1196.8 L279.0 1174.9 L289.0 1138.4 L299.0 1240.6 L309.0 1094.6 L319.0 1204.1 L329.0 1204.1 L339.0 1204.1 L349.0 1185.8 L359.0 1160.3 L369.0 1058.1 L379.0 1149.3 L389.0 1222.3 L399.0 1247.9 L409.0 1240.6 L418.9 948.5 L428.9 1058.1 L438.9 948.5 L448.9 1131.1 L458.9 1167.6 L468.9 1131.1 L478.9 1277.1 L488.9 1222.3 L498.9 1207.7 L508.9 1021.6 L518.9 1101.9 L528.9 1131.1 L538.9 1167.6 L548.9 1131.1 L558.9 1101.9 L568.9 1131.1 L578.9 1204.1 L588.9 1058.1 L598.9 1112.8 L608.9 1247.9 L618.9 1222.3 L628.9 1167.6 L638.9 1101.9 L648.9 1123.8 L658.9 1160.3 L668.9 1211.4 L678.9 1235.1 L688.9 1204.1 L698.9 1131.1 L708.9 693.0 L718.9 1277.1 L728.9 1185.8 L738.9 1131.1 L748.9 1240.6 L758.9 1247.9 L768.9 1167.6 L778.8 1240.6 L788.8 1167.6 L798.8 1222.3 L808.8 1101.9 L818.8 1258.8 L828.8 1247.9 L838.8 1277.1 L848.8 1204.1 L858.8 985.1 L868.8 1189.5 L878.8 1211.4 L888.8 1229.6 L898.8 1222.3 L908.8 1240.6 L918.8 1233.3 L928.8 952.2 L938.8 1131.1 L948.8 1149.3 L958.8 1222.3 L968.8 1277.1 L978.8 1167.6 L988.8 985.1 L998.8 988.7 L1008.8 1185.8 L1018.8 1105.5 L1028.8 1174.9 L1038.8 1134.7 L1048.8 1174.9 L1058.8 1204.1 L1068.8 1233.3 L1078.8 1269.8 L1088.8 1094.6 L1098.8 1142.0 L1108.8 1255.2 L1118.8 1222.3 L1128.8 1266.1 L1138.7 1134.7 L1148.7 1167.6 L1158.7 1266.1 L1168.7 1262.5 L1178.7 1196.8 L1188.7 1061.7 L1198.7 1087.3 L1208.7 1021.6 L1218.7 1101.9 L1228.7 1196.8 L1238.7 1185.8 L1248.7 1196.8 L1258.7 1189.5 L1268.7 1134.7 L1278.7 1185.8 L1288.7 1134.7 L1298.7 1258.8 L1308.7 1222.3 L1318.7 1218.7 L1328.7 1240.6 L1338.7 1047.1 L1348.7 992.4 L1358.7 1105.5 L1368.7 1149.3 L1378.7 1200.4 L1388.7 1233.3 L1398.7 1061.7 L1408.7 1200.4 L1418.7 1021.6 L1428.7 1094.6 L1438.7 1189.5 L1448.7 1200.4 L1458.7 1134.7 L1468.7 1036.2 L1478.7 839.0 L1488.7 1076.3 L1498.6 1061.7 L1508.6 1105.5 L1518.6 1185.8 L1528.6 1153.0 L1538.6 1021.6 L1548.6 1094.6 L1558.6 1116.5 L1568.6 1149.3 L1578.6 1149.3 L1588.6 1160.3 L1598.6 1196.8 L1608.6 1185.8 L1618.6 1174.9 L1628.6 1149.3 L1638.6 1116.5 L1648.6 1058.1 L1658.6 1200.4 L1668.6 1182.2 L1678.6 1167.6 L1688.6 1061.7 L1698.6 1058.1 L1708.6 1160.3 L1718.6 1105.5 L1728.6 1255.2 L1738.6 1233.3 L1748.6 1222.3 L1758.6 1207.7 L1768.6 1229.6 L1778.6 1174.9 L1788.6 1269.8 L1798.6 1277.1 L1808.6 1255.2 L1818.6 1156.6 L1828.6 1222.3 L1838.6 1204.1 L1848.6 1182.2 L1858.5 1207.7 L1868.5 1229.6 L1878.5 1174.9 L1888.5 988.7 L1898.5 1127.4 L1908.5 1174.9 L1918.5 1174.9 L1928.5 1233.3 L1938.5 1222.3 L1948.5 1233.3 L1958.5 1174.9 L1968.5 1021.6 L1978.5 1174.9 L1988.5 1153.0 L1998.5 1269.8 L2008.5 1277.1 L2018.5 1240.6 L2028.5 1204.1 L2038.5 1149.3 L2048.5 1094.6 L2058.5 1167.6 L2068.5 1207.7 L2078.5 1134.7 L2088.5 1211.4 L2098.5 1160.3 L2108.5 1185.8 L2118.5 1233.3 L2128.5 1101.9 L2138.5 1094.6 L2148.5 1229.6 L2158.5 1222.3 L2168.5 1182.2 L2178.5 1094.6 L2188.5 1028.9 L2198.5 1182.2 L2208.5 1134.7 L2218.5 1229.6 L2228.4 1204.1 L2238.4 1189.5 L2248.4 1149.3 L2258.4 1105.5 L2268.4 1204.1 L2278.4 1222.3 L2288.4 1244.2 L2298.4 1185.8 L2308.4 1142.0 L2318.4 1160.3 L2328.4 1094.6 L2338.4 1083.6 L2348.4 1240.6 L2358.4 1218.7 L2368.4 1131.1 L2378.4 1167.6 L2388.4 1185.8 L2398.4 1189.5 L2408.4 1200.4 L2418.4 1269.8 L2428.4 1277.1 L2438.4 1247.9 L2448.4 1207.7 L2458.4 1050.8 L2468.4 1167.6 L2478.4 1196.8 L2488.4 1185.8 L2498.4 1182.2 L2508.4 1204.1 L2518.4 1156.6 L2528.4 1098.2 L2538.4 1167.6 L2548.4 1185.8 L2558.4 1222.3 L2568.4 1167.6 L2578.4 1134.7 L2588.3 1094.6 L2598.3 1058.1 L2608.3 1094.6 L2618.3 1105.5 L2628.3 1189.5 L2638.3 1167.6 L2648.3 1134.7 L2658.3 1116.5 L2668.3 1094.6 L2678.3 1167.6 L2688.3 1233.3 L2698.3 1174.9 L2708.3 1200.4 L2718.3 1094.6 L2728.3 948.5 L2738.3 1185.8 L2748.3 1240.6 L2758.3 1200.4 L2768.3 1167.6 L2778.3 1185.8 L2788.3 1174.9 L2798.3 1094.6 L2808.3 1196.8 L2818.3 1105.5 L2828.3 1120.1 L2838.3 1185.8 L2848.3 1222.3 L2858.3 1277.1 L2868.3 1211.4 L2878.3 1167.6 L2888.3 1233.3 L2898.3 1204.1 L2908.3 1277.1 L2918.3 1204.1 L2928.3 1167.6 L2938.3 1101.9 L2948.2 1171.2 L2958.2 1204.1 L2968.2 1233.3 L2978.2 1222.3 L2988.2 1236.9 L2998.2 1189.5 L3008.2 1105.5 L3018.2 1112.8 L3028.2 1094.6 L3038.2 992.4 L3048.2 1083.6 L3058.2 1189.5 L3068.2 1227.8 L3078.2 1204.1 L3088.2 1174.9 L3098.2 1145.7 L3108.2 1094.6 L3118.2 1240.6 L3128.2 1204.1 L3138.2 1167.6 L3148.2 1094.6 L3158.2 1120.1 L3168.2 1021.6 L3178.2 1083.6 L3188.2 1189.5 L3198.2 1204.1 L3208.2 1222.3 L3218.2 1240.6 L3228.2 1189.5 L3238.2 1182.2 L3248.2 1233.3 L3258.2 1174.9 L3268.2 1222.3 L3278.2 1277.1 L3288.2 1149.3 L3298.2 1036.2 L3308.1 1134.7 L3318.1 1185.8 L3328.1 1167.6 L3338.1 1189.5 L3348.1 1145.7 L3358.1 1134.7 L3368.1 1094.6 L3378.1 1058.1 L3388.1 1185.8 L3398.1 1229.6 L3408.1 1174.9 L3418.1 1105.5 L3428.1 1094.6 L3438.1 1127.4 L3448.1 1116.5 L3458.1 1105.5 L3468.1 1094.6 L3478.1 1072.7 L3488.1 1233.3 L3498.1 1105.5 L3508.1 1061.7 L3518.1 1080.0 L3528.1 1222.3 L3538.1 1204.1 L3548.1 1233.3 L3558.1 1174.9 L3568.1 1061.7 L3578.1 1094.6 L3588.1 988.7 L3598.1 1123.8 L3608.1 1193.1 L3618.1 1222.3 L3628.1 1153.0 L3638.1 1058.1 L3648.1 996.0 L3658.1 1174.9 L3668.0 1269.8 L3678.0 1153.0 L3688.0 1174.9 L3698.0 1196.8 L3708.0 1204.1 L3718.0 1222.3 L3728.0 1233.3 L3738.0 1076.3 L3748.0 1240.6 L3758.0 1204.1 L3768.0 1167.6 L3778.0 1145.7 L3788.0 1174.9 L3798.0 1222.3 L3808.0 1247.9 L3818.0 1277.1 L3828.0 1222.3 L3838.0 1200.4 L3848.0 1204.1" fill="none" stroke="#3b82f6" stroke-width="4.0" stroke-dasharray="12.5 12.5"/><path d="M229.0 1205.5 L239.0 1206.1 L249.0 1206.6 L259.0 1201.9 L269.0 1195.0 L279.0 1200.4 L289.0 1203.5 L299.0 1206.6 L309.0 1216.1 L319.0 1215.0 L329.0 1211.4 L339.0 1210.3 L349.0 1212.5 L359.0 1220.9 L369.0 1223.1 L379.0 1232.6 L389.0 1225.6 L399.0 1223.1 L409.0 1196.1 L418.9 1208.8 L428.9 1219.4 L438.9 1215.0 L448.9 1226.7 L458.9 1220.9 L468.9 1218.7 L478.9 1223.1 L488.9 1215.0 L498.9 1219.4 L508.9 1215.0 L518.9 1223.1 L528.9 1220.9 L538.9 1208.8 L548.9 1207.7 L558.9 1205.5 L568.9 1208.8 L578.9 1215.0 L588.9 1217.2 L598.9 1218.7 L608.9 1218.7 L618.9 1211.4 L628.9 1217.2 L638.9 1218.7 L648.9 1217.2 L658.9 1226.7 L668.9 1216.1 L678.9 1211.4 L688.9 1208.8 L698.9 1197.2 L708.9 1206.6 L718.9 1219.4 L728.9 1213.6 L738.9 1228.9 L748.9 1213.6 L758.9 1211.4 L768.9 1222.0 L778.8 1223.1 L788.8 1218.7 L798.8 1213.6 L808.8 1212.5 L818.8 1206.6 L828.8 1201.9 L838.8 1206.6 L848.8 1199.7 L858.8 1198.2 L868.8 1189.1 L878.8 1197.2 L888.8 1193.5 L898.8 1218.7 L908.8 1191.3 L918.8 1201.9 L928.8 1205.5 L938.8 1196.1 L948.8 1212.5 L958.8 1201.9 L968.8 1213.6 L978.8 1197.2 L988.8 1198.2 L998.8 1193.5 L1008.8 1201.9 L1018.8 1198.2 L1028.8 1212.5 L1038.8 1218.7 L1048.8 1143.1 L1058.8 1176.0 L1068.8 1211.4 L1078.8 1205.5 L1088.8 1208.8 L1098.8 1182.9 L1108.8 1170.1 L1118.8 1157.0 L1128.8 1159.6 L1138.7 1169.0 L1148.7 1150.1 L1158.7 1161.7 L1168.7 1172.3 L1178.7 1181.8 L1188.7 1174.9 L1198.7 1176.0 L1208.7 1180.7 L1218.7 1181.8 L1228.7 1191.3 L1238.7 1173.8 L1248.7 1173.8 L1258.7 1157.0 L1268.7 1167.6 L1278.7 1186.6 L1288.7 1205.5 L1298.7 1189.7 L1308.7 1173.8 L1318.7 1193.5 L1328.7 1160.6 L1338.7 1127.8 L1348.7 1146.0 L1358.7 1164.3 L1368.7 1172.5 L1378.7 1180.7 L1388.7 1173.8 L1398.7 1142.0 L1408.7 1150.1 L1418.7 1167.2 L1428.7 1184.4 L1438.7 1181.5 L1448.7 1178.5 L1458.7 1193.5 L1468.7 1153.7 L1478.7 1144.8 L1488.7 1135.8 L1498.6 1151.2 L1508.6 1166.5 L1518.6 1182.9 L1528.6 1180.7 L1538.6 1172.5 L1548.6 1164.3 L1558.6 1153.7 L1568.6 1167.2 L1578.6 1180.7 L1588.6 1177.8 L1598.6 1174.9 L1608.6 1150.1 L1618.6 1147.9 L1628.6 1164.3 L1638.6 1166.5 L1648.6 1187.7 L1658.6 1170.1 L1668.6 1173.8 L1678.6 1142.6 L1688.6 1111.4 L1698.6 1152.6 L1708.6 1131.1 L1718.6 1135.8 L1728.6 1157.0 L1738.6 1151.2 L1748.6 1126.5 L1758.6 1101.9 L1768.6 1115.9 L1778.6 1130.0 L1788.6 1132.5 L1798.6 1145.3 L1808.6 1150.1 L1818.6 1115.7 L1828.6 1138.4 L1838.6 1145.7 L1848.6 1152.3 L1858.5 1118.3 L1868.5 1152.3 L1878.5 1140.6 L1888.5 1132.5 L1898.5 1161.7 L1908.5 1150.1 L1918.5 1152.3 L1928.5 1145.3 L1938.5 1139.5 L1948.5 1159.6 L1958.5 1131.1 L1968.5 1076.3 L1978.5 1016.8 L1988.5 1117.2 L1998.5 1071.2 L2008.5 1081.8 L2018.5 1045.3 L2028.5 1041.6 L2038.5 1108.8 L2048.5 1077.0 L2058.5 1094.6 L2068.5 1113.6 L2078.5 1107.7 L2088.5 1104.1 L2098.5 1052.2 L2108.5 1066.5 L2118.5 1101.9 L2128.5 1066.5 L2138.5 1087.6 L2148.5 1081.8 L2158.5 1085.1 L2168.5 1055.9 L2178.5 1039.4 L2188.5 1093.5 L2198.5 1111.4 L2208.5 1114.7 L2218.5 1107.7 L2228.4 1063.9 L2238.4 1053.3 L2248.4 715.6 L2258.4 982.9 L2268.4 1015.7 L2278.4 1058.1 L2288.4 1062.8 L2298.4 1063.9 L2308.4 1074.5 L2318.4 1067.6 L2328.4 1053.3 L2338.4 1004.0 L2348.4 1114.7 L2358.4 1114.7 L2368.4 1105.2 L2378.4 1100.4 L2388.4 1108.8 L2398.4 1107.7 L2408.4 1134.7 L2418.4 1135.8 L2428.4 1128.9 L2438.4 1122.0 L2448.4 1109.9 L2458.4 1103.0 L2468.4 1107.7 L2478.4 1117.2 L2488.4 1131.1 L2498.4 1138.4 L2508.4 1108.8 L2518.4 1108.1 L2528.4 1107.7 L2538.4 1107.7 L2548.4 1117.2 L2558.4 1126.3 L2568.4 1123.0 L2578.4 1105.2 L2588.3 1086.5 L2598.3 1100.4 L2608.3 1073.4 L2618.3 1081.8 L2628.3 1112.5 L2638.3 1112.5 L2648.3 1094.6 L2658.3 1040.5 L2668.3 1041.6 L2678.3 1077.0 L2688.3 1096.0 L2698.3 1098.2 L2708.3 1126.3 L2718.3 1107.7 L2728.3 1088.7 L2738.3 1109.9 L2748.3 1113.6 L2758.3 1114.7 L2768.3 1185.5 L2778.3 1225.6 L2788.3 1197.2 L2798.3 1169.0 L2808.3 1178.5 L2818.3 1179.6 L2828.3 1152.3 L2838.3 1192.4 L2848.3 1213.6 L2858.3 1201.9 L2868.3 1172.3 L2878.3 1185.5 L2888.3 1166.5 L2898.3 1182.9 L2908.3 1199.7 L2918.3 1219.4 L2928.3 1211.4 L2938.3 1185.5 L2948.2 1186.6 L2958.2 1192.4 L2968.2 1187.7 L2978.2 1197.2 L2988.2 1215.0 L2998.2 1215.0 L3008.2 1197.2 L3018.2 1186.6 L3028.2 1199.7 L3038.2 1195.0 L3048.2 1206.6 L3058.2 1227.8 L3068.2 1213.6 L3078.2 1193.5 L3088.2 1190.2 L3098.2 1178.5 L3108.2 1199.7 L3118.2 1206.6 L3128.2 1227.8 L3138.2 1199.7 L3148.2 1208.8 L3158.2 1215.0 L3168.2 1199.7 L3178.2 1157.0 L3188.2 1164.3 L3198.2 1103.0 L3208.2 1218.7 L3218.2 1190.2 L3228.2 1181.8 L3238.2 1201.9 L3248.2 1217.2 L3258.2 1224.2 L3268.2 1216.1 L3278.2 1206.6 L3288.2 1197.2 L3298.2 1197.2 L3308.1 1179.6 L3318.1 1193.5 L3328.1 1208.8 L3338.1 1212.5 L3348.1 1201.9 L3358.1 1180.7 L3368.1 1190.2 L3378.1 1199.7 L3388.1 1201.9 L3398.1 1185.5 L3408.1 1206.6 L3418.1 1192.4 L3428.1 700.3 L3438.1 1072.7 L3448.1 1159.6 L3458.1 1187.7 L3468.1 1206.6 L3478.1 1226.7 L3488.1 1225.6 L3498.1 1192.4 L3508.1 1195.0 L3518.1 1172.3 L3528.1 1195.0 L3538.1 1204.5 L3548.1 1220.9 L3558.1 1197.2 L3568.1 1196.1 L3578.1 1195.0 L3588.1 1135.8 L3598.1 1137.3 L3608.1 1143.1 L3618.1 1161.7 L3628.1 1172.3 L3638.1 1143.1 L3648.1 1147.9 L3658.1 1125.2 L3668.0 1134.7 L3678.0 1131.1 L3688.0 1185.5 L3698.0 1193.5 L3708.0 1173.8 L3718.0 1167.6 L3728.0 1192.4 L3738.0 1187.7 L3748.0 1195.0 L3758.0 1211.4 L3768.0 1172.3 L3778.0 1186.6 L3788.0 1189.1 L3798.0 1185.5 L3808.0 1184.4 L3818.0 1187.7 L3828.0 1204.5 L3838.0 1185.5 L3848.0 1165.4" fill="none" stroke="#8763d5" stroke-width="4.0"/><path d="M229.0 1240.6 L239.0 1204.1 L249.0 1167.6 L259.0 1277.1 L269.0 1240.6 L279.0 1131.1 L289.0 1021.6 L299.0 1131.1 L309.0 1167.6 L319.0 1277.1 L329.0 1240.6 L339.0 1240.6 L349.0 1094.6 L359.0 1094.6 L369.0 1094.6 L379.0 1167.6 L389.0 1204.1 L399.0 1277.1 L409.0 1277.1 L418.9 1240.6 L428.9 1240.6 L438.9 1204.1 L448.9 1204.1 L458.9 1167.6 L468.9 1204.1 L478.9 1204.1 L488.9 1094.6 L498.9 1204.1 L508.9 1058.1 L518.9 1149.3 L528.9 1240.6 L538.9 1240.6 L548.9 1277.1 L558.9 1204.1 L568.9 1204.1 L578.9 1277.1 L588.9 1204.1 L598.9 1240.6 L608.9 1277.1 L618.9 1167.6 L628.9 1131.1 L638.9 1277.1 L648.9 1240.6 L658.9 1204.1 L668.9 1277.1 L678.9 1277.1 L688.9 1240.6 L698.9 1240.6 L708.9 1240.6 L718.9 1240.6 L728.9 1240.6 L738.9 1240.6 L748.9 1277.1 L758.9 1204.1 L768.9 1240.6 L778.8 1240.6 L788.8 1240.6 L798.8 1167.6 L808.8 1131.1 L818.8 1277.1 L828.8 1277.1 L838.8 1204.1 L848.8 1131.1 L858.8 1167.6 L868.8 1240.6 L878.8 1277.1 L888.8 1277.1 L898.8 1094.6 L908.8 1240.6 L918.8 1167.6 L928.8 1167.6 L938.8 1058.1 L948.8 1167.6 L958.8 1277.1 L968.8 1204.1 L978.8 1131.1 L988.8 1131.1 L998.8 1240.6 L1008.8 1131.1 L1018.8 1021.6 L1028.8 1240.6 L1038.8 1240.6 L1048.8 1240.6 L1058.8 1131.1 L1068.8 1204.1 L1078.8 1131.1 L1088.8 1277.1 L1098.8 1240.6 L1108.8 1240.6 L1118.8 1167.6 L1128.8 1222.3 L1138.7 1277.1 L1148.7 1204.1 L1158.7 1240.6 L1168.7 1240.6 L1178.7 1277.1 L1188.7 1240.6 L1198.7 1204.1 L1208.7 1167.6 L1218.7 1204.1 L1228.7 1277.1 L1238.7 1240.6 L1248.7 1240.6 L1258.7 1167.6 L1268.7 1240.6 L1278.7 1167.6 L1288.7 1240.6 L1298.7 1277.1 L1308.7 1277.1 L1318.7 1277.1 L1328.7 1240.6 L1338.7 1058.1 L1348.7 1167.6 L1358.7 1167.6 L1368.7 1204.1 L1378.7 1277.1 L1388.7 1277.1 L1398.7 1094.6 L1408.7 1131.1 L1418.7 1174.9 L1428.7 1240.6 L1438.7 1204.1 L1448.7 1277.1 L1458.7 1167.6 L1468.7 1204.1 L1478.7 1240.6 L1488.7 1185.8 L1498.6 1131.1 L1508.6 1131.1 L1518.6 1240.6 L1528.6 1167.6 L1538.6 1167.6 L1548.6 1131.1 L1558.6 1094.6 L1568.6 948.5 L1578.6 1131.1 L1588.6 1185.8 L1598.6 1240.6 L1608.6 1204.1 L1618.6 1131.1 L1628.6 1058.1 L1638.6 1131.1 L1648.6 1185.8 L1658.6 1240.6 L1668.6 1277.1 L1678.6 1277.1 L1688.6 1094.6 L1698.6 1131.1 L1708.6 1094.6 L1718.6 1058.1 L1728.6 1277.1 L1738.6 1277.1 L1748.6 985.1 L1758.6 1131.1 L1768.6 1021.6 L1778.6 1131.1 L1788.6 1094.6 L1798.6 1240.6 L1808.6 1240.6 L1818.6 1149.3 L1828.6 1094.6 L1838.6 1058.1 L1848.6 1167.6 L1858.5 1167.6 L1868.5 1222.3 L1878.5 1277.1 L1888.5 1167.6 L1898.5 1131.1 L1908.5 1167.6 L1918.5 1167.6 L1928.5 1131.1 L1938.5 1277.1 L1948.5 1240.6 L1958.5 1167.6 L1968.5 1058.1 L1978.5 1240.6 L1988.5 1149.3 L1998.5 1058.1 L2008.5 1240.6 L2018.5 1167.6 L2028.5 1094.6 L2038.5 1131.1 L2048.5 1131.1 L2058.5 1058.1 L2068.5 1094.6 L2078.5 1204.1 L2088.5 1240.6 L2098.5 1094.6 L2108.5 1204.1 L2118.5 1131.1 L2128.5 1240.6 L2138.5 1204.1 L2148.5 1277.1 L2158.5 1277.1 L2168.5 1167.6 L2178.5 1058.1 L2188.5 1131.1 L2198.5 1167.6 L2208.5 1204.1 L2218.5 1277.1 L2228.4 1240.6 L2238.4 1167.6 L2248.4 1094.6 L2258.4 1240.6 L2268.4 1131.1 L2278.4 1021.6 L2288.4 1204.1 L2298.4 1167.6 L2308.4 1112.8 L2318.4 1094.6 L2328.4 1021.6 L2338.4 1240.6 L2348.4 1167.6 L2358.4 1277.1 L2368.4 1277.1 L2378.4 1021.6 L2388.4 1058.1 L2398.4 1204.1 L2408.4 1131.1 L2418.4 1167.6 L2428.4 1277.1 L2438.4 1277.1 L2448.4 1131.1 L2458.4 985.1 L2468.4 1167.6 L2478.4 1058.1 L2488.4 1277.1 L2498.4 1204.1 L2508.4 1277.1 L2518.4 1193.1 L2528.4 1167.6 L2538.4 1167.6 L2548.4 1094.6 L2558.4 1240.6 L2568.4 1277.1 L2578.4 1277.1 L2588.3 1094.6 L2598.3 1167.6 L2608.3 1240.6 L2618.3 1131.1 L2628.3 1240.6 L2638.3 1240.6 L2648.3 1277.1 L2658.3 912.0 L2668.3 1112.8 L2678.3 912.0 L2688.3 1156.6 L2698.3 1094.6 L2708.3 1277.1 L2718.3 1167.6 L2728.3 1094.6 L2738.3 1240.6 L2748.3 1094.6 L2758.3 1277.1 L2768.3 1167.6 L2778.3 1240.6 L2788.3 1094.6 L2798.3 985.1 L2808.3 985.1 L2818.3 1167.6 L2828.3 1094.6 L2838.3 1167.6 L2848.3 1204.1 L2858.3 1058.1 L2868.3 1021.6 L2878.3 1094.6 L2888.3 1094.6 L2898.3 1167.6 L2908.3 1058.1 L2918.3 1240.6 L2928.3 1240.6 L2938.3 1058.1 L2948.2 1094.6 L2958.2 1131.1 L2968.2 1240.6 L2978.2 1204.1 L2988.2 1204.1 L2998.2 1240.6 L3008.2 1167.6 L3018.2 1094.6 L3028.2 1167.6 L3038.2 1094.6 L3048.2 1204.1 L3058.2 1240.6 L3068.2 1240.6 L3078.2 1167.6 L3088.2 1058.1 L3098.2 1167.6 L3108.2 1167.6 L3118.2 1167.6 L3128.2 1277.1 L3138.2 1240.6 L3148.2 1167.6 L3158.2 1131.1 L3168.2 1167.6 L3178.2 1058.1 L3188.2 1167.6 L3198.2 1240.6 L3208.2 1167.6 L3218.2 948.5 L3228.2 1167.6 L3238.2 1131.1 L3248.2 1174.9 L3258.2 1222.3 L3268.2 1277.1 L3278.2 1240.6 L3288.2 1094.6 L3298.2 948.5 L3308.1 1131.1 L3318.1 1058.1 L3328.1 1240.6 L3338.1 1204.1 L3348.1 1277.1 L3358.1 1149.3 L3368.1 1021.6 L3378.1 1094.6 L3388.1 1240.6 L3398.1 1167.6 L3408.1 1277.1 L3418.1 1277.1 L3428.1 1021.6 L3438.1 729.5 L3448.1 1131.1 L3458.1 1131.1 L3468.1 985.1 L3478.1 1131.1 L3488.1 1240.6 L3498.1 1204.1 L3508.1 1058.1 L3518.1 1094.6 L3528.1 1204.1 L3538.1 1204.1 L3548.1 1222.3 L3558.1 1277.1 L3568.1 1167.6 L3578.1 1058.1 L3588.1 1167.6 L3598.1 1167.6 L3608.1 1167.6 L3618.1 1277.1 L3628.1 1204.1 L3638.1 1167.6 L3648.1 1131.1 L3658.1 1131.1 L3668.0 1167.6 L3678.0 1131.1 L3688.0 1277.1 L3698.0 1240.6 L3708.0 1094.6 L3718.0 1167.6 L3728.0 1167.6 L3738.0 1204.1 L3748.0 1058.1 L3758.0 1167.6 L3768.0 1277.1 L3778.0 1094.6 L3788.0 1131.1 L3798.0 1204.1 L3808.0 1240.6 L3818.0 1240.6 L3828.0 1204.1 L3838.0 1277.1 L3848.0 1204.1" fill="none" stroke="#3b82f6" stroke-width="4.0"/></svg>
<div class="t" style="left:143.0px;top:1422.3px;font-size:46px;line-height:46px;color:#030712;font-weight:700;letter-spacing:0px;-webkit-text-stroke:0">Queries</div>
<div style="position:absolute;left:142.0px;top:1537.0px;width:25.0px;height:25.0px;border-radius:50%;background:#3b82f6"></div>
<div class="t" style="left:192.0px;top:1529.1px;font-size:43px;line-height:43px;color:#030712;font-weight:400;letter-spacing:0px;">Features</div>
<svg style="position:absolute;left:408.8px;top:1534.3px;overflow:visible;" width="30.4" height="30.4" viewBox="0 0 30.4 30.4"><circle cx="15.2" cy="15.2" r="10.799999999999999" fill="none" stroke="#3b82f6" stroke-width="2.8" stroke-dasharray="11.20 5.77" transform="rotate(-100 15.2 15.2)"/></svg>
<div class="t" style="left:461.0px;top:1529.1px;font-size:43px;line-height:43px;color:#030712;font-weight:400;letter-spacing:0px;">Blog Posts</div>
<div class="t" style="left:153.0px;top:1624.5px;font-size:36px;line-height:36px;color:#6b7280;font-weight:700;letter-spacing:0px;-webkit-text-stroke:0">Query</div>
<div style="position:absolute;left:774.2px;top:1630.0px;width:25.0px;height:25.0px;border-radius:50%;background:#3b82f6"></div>
<div class="t" style="left:810.0px;top:1622.8px;font-size:38px;line-height:38px;color:#3b82f6;font-weight:400;letter-spacing:0px;-webkit-text-stroke:0.6px #3b82f6"><span style="text-decoration:underline;text-decoration-thickness:2.5px;text-underline-offset:5px">Clicks</span></div>
<svg style="position:absolute;left:977.3px;top:1627.3px;overflow:visible;" width="30.4" height="30.4" viewBox="0 0 30.4 30.4"><circle cx="15.2" cy="15.2" r="10.799999999999999" fill="none" stroke="#3b82f6" stroke-width="2.8" stroke-dasharray="11.20 5.77" transform="rotate(-100 15.2 15.2)"/></svg>
<div class="t" style="left:1017.0px;top:1622.8px;font-size:38px;line-height:38px;color:#3b82f6;font-weight:400;letter-spacing:0px;-webkit-text-stroke:0.6px #3b82f6">Clicks</div>
<div class="t" style="left:1186.0px;top:1622.8px;font-size:38px;line-height:38px;color:#6b7280;font-weight:400;letter-spacing:0px;-webkit-text-stroke:0.8px #6b7280">Diff</div>
<div style="position:absolute;left:1434.2px;top:1630.0px;width:25.0px;height:25.0px;border-radius:50%;background:#8763d5"></div>
<div class="t" style="left:1471.0px;top:1622.8px;font-size:38px;line-height:38px;color:#8763d5;font-weight:400;letter-spacing:-0.6px;-webkit-text-stroke:0.6px #8763d5">Impre...</div>
<svg style="position:absolute;left:1625.0px;top:1627.3px;overflow:visible;" width="30.4" height="30.4" viewBox="0 0 30.4 30.4"><circle cx="15.2" cy="15.2" r="10.799999999999999" fill="none" stroke="#8763d5" stroke-width="2.8" stroke-dasharray="11.20 5.77" transform="rotate(-100 15.2 15.2)"/></svg>
<div class="t" style="left:1664.0px;top:1622.8px;font-size:38px;line-height:38px;color:#8763d5;font-weight:400;letter-spacing:-0.6px;-webkit-text-stroke:0.6px #8763d5">Impre...</div>
<div class="t" style="left:1819.0px;top:1622.8px;font-size:38px;line-height:38px;color:#6b7280;font-weight:400;letter-spacing:0px;-webkit-text-stroke:0.8px #6b7280">Diff</div>
<div style="position:absolute;left:142.0px;top:1680.0px;width:1859.0px;height:2.5px;background:#e2e8f0;"></div>
<div style="position:absolute;left:1382.0px;top:1618.0px;width:2.5px;height:772.0px;background:#e2e8f0;"></div>
<div class="t" style="left:154.0px;top:1693.2px;font-size:44px;line-height:44px;color:#030712;font-weight:400;letter-spacing:0.26px;">google search console hist...</div>
<div class="t" style="left:774.0px;top:1704.7px;font-size:44px;line-height:44px;color:#030712;font-weight:400;letter-spacing:0px;"><svg width="17.33" height="31.50" style="vertical-align:baseline;overflow:visible"><polygon points="8.03,0.00 14.33,0.00 14.33,31.50 9.84,31.50 9.84,4.41 2.52,9.58 2.52,4.41" fill="currentColor"/></svg>0</div>
<div style="position:absolute;left:983.9px;top:1726.9px;width:13.0px;height:3.5px;background:#6b7280;"></div>
<svg style="position:absolute;left:1188.2px;top:1707.5px;overflow:visible;" width="37.5" height="37.5" viewBox="0 0 24 24"><g fill="none" stroke="#00c04f" stroke-width="2" stroke-linecap="round" stroke-linejoin="round"><path d="M12 5l0 14"/><path d="M18 11l-6 -6"/><path d="M6 11l6 -6"/></g></svg>
<div class="t" style="left:1230.5px;top:1704.7px;font-size:44px;line-height:44px;color:#00c04f;font-weight:400;letter-spacing:0px;-webkit-text-stroke:0.15px #00c04f"><svg width="17.33" height="31.50" style="vertical-align:baseline;overflow:visible"><polygon points="8.03,0.00 14.33,0.00 14.33,31.50 9.84,31.50 9.84,4.41 2.52,9.58 2.52,4.41" fill="currentColor"/></svg>0</div>
<div class="t" style="left:1436.0px;top:1704.7px;font-size:44px;line-height:44px;color:#030712;font-weight:400;letter-spacing:0px;">3.4k</div>
<div style="position:absolute;left:1630.9px;top:1726.9px;width:13.0px;height:3.5px;background:#6b7280;"></div>
<svg style="position:absolute;left:1819.5px;top:1707.5px;overflow:visible;" width="37.5" height="37.5" viewBox="0 0 24 24"><g fill="none" stroke="#00c04f" stroke-width="2" stroke-linecap="round" stroke-linejoin="round"><path d="M12 5l0 14"/><path d="M18 11l-6 -6"/><path d="M6 11l6 -6"/></g></svg>
<div class="t" style="left:1866.0px;top:1704.7px;font-size:44px;line-height:44px;color:#00c04f;font-weight:400;letter-spacing:0px;-webkit-text-stroke:0.15px #00c04f">3.4k</div>
<div class="t" style="left:154.0px;top:1780.0px;font-size:44px;line-height:44px;color:#030712;font-weight:400;letter-spacing:0.43px;">seogets</div>
<svg style="position:absolute;left:325.3px;top:1780.2px;overflow:visible;" width="47" height="47" viewBox="0 0 24 24"><path d="M3.85 8.62a4 4 0 0 1 4.78-4.77 4 4 0 0 1 6.74 0 4 4 0 0 1 4.78 4.78 4 4 0 0 1 0 6.74 4 4 0 0 1-4.77 4.78 4 4 0 0 1-6.75 0 4 4 0 0 1-4.78-4.77 4 4 0 0 1 0-6.76Z" fill="none" stroke="#15803d" stroke-width="1.5"/><path d="M10.6 10.2l1.8-1.6v7" fill="none" stroke="#15803d" stroke-width="1.5" stroke-linecap="round" stroke-linejoin="round"/></svg>
<div class="t" style="left:774.0px;top:1791.5px;font-size:44px;line-height:44px;color:#030712;font-weight:400;letter-spacing:0px;">9</div>
<div class="t" style="left:982.0px;top:1791.5px;font-size:44px;line-height:44px;color:#030712;font-weight:400;letter-spacing:0px;">5</div>
<svg style="position:absolute;left:1188.2px;top:1794.2px;overflow:visible;" width="37.5" height="37.5" viewBox="0 0 24 24"><g fill="none" stroke="#00c04f" stroke-width="2" stroke-linecap="round" stroke-linejoin="round"><path d="M12 5l0 14"/><path d="M18 11l-6 -6"/><path d="M6 11l6 -6"/></g></svg>
<div class="t" style="left:1230.5px;top:1791.5px;font-size:44px;line-height:44px;color:#00c04f;font-weight:400;letter-spacing:0px;-webkit-text-stroke:0.15px #00c04f">4</div>
<div class="t" style="left:1436.0px;top:1791.5px;font-size:44px;line-height:44px;color:#030712;font-weight:400;letter-spacing:0px;">9.5k</div>
<div class="t" style="left:1629.0px;top:1791.5px;font-size:44px;line-height:44px;color:#030712;font-weight:400;letter-spacing:-4px;"><svg width="17.33" height="31.50" style="vertical-align:baseline;overflow:visible"><polygon points="8.03,0.00 14.33,0.00 14.33,31.50 9.84,31.50 9.84,4.41 2.52,9.58 2.52,4.41" fill="currentColor"/></svg>.<svg width="17.33" height="31.50" style="vertical-align:baseline;overflow:visible"><polygon points="8.03,0.00 14.33,0.00 14.33,31.50 9.84,31.50 9.84,4.41 2.52,9.58 2.52,4.41" fill="currentColor"/></svg>k</div>
<svg style="position:absolute;left:1819.5px;top:1794.2px;overflow:visible;" width="37.5" height="37.5" viewBox="0 0 24 24"><g fill="none" stroke="#00c04f" stroke-width="2" stroke-linecap="round" stroke-linejoin="round"><path d="M12 5l0 14"/><path d="M18 11l-6 -6"/><path d="M6 11l6 -6"/></g></svg>
<div class="t" style="left:1866.0px;top:1791.5px;font-size:44px;line-height:44px;color:#00c04f;font-weight:400;letter-spacing:0px;-webkit-text-stroke:0.15px #00c04f">8.3k</div>
<div class="t" style="left:154.0px;top:1866.7px;font-size:44px;line-height:44px;color:#030712;font-weight:400;letter-spacing:0.28px;">google search console mo...</div>
<div class="t" style="left:774.0px;top:1878.2px;font-size:44px;line-height:44px;color:#030712;font-weight:400;letter-spacing:0px;">9</div>
<div style="position:absolute;left:983.9px;top:1900.4px;width:13.0px;height:3.5px;background:#6b7280;"></div>
<svg style="position:absolute;left:1188.2px;top:1881.0px;overflow:visible;" width="37.5" height="37.5" viewBox="0 0 24 24"><g fill="none" stroke="#00c04f" stroke-width="2" stroke-linecap="round" stroke-linejoin="round"><path d="M12 5l0 14"/><path d="M18 11l-6 -6"/><path d="M6 11l6 -6"/></g></svg>
<div class="t" style="left:1230.5px;top:1878.2px;font-size:44px;line-height:44px;color:#00c04f;font-weight:400;letter-spacing:0px;-webkit-text-stroke:0.15px #00c04f">9</div>
<div class="t" style="left:1436.0px;top:1878.2px;font-size:44px;line-height:44px;color:#030712;font-weight:400;letter-spacing:0px;">538</div>
<div style="position:absolute;left:1630.9px;top:1900.4px;width:13.0px;height:3.5px;background:#6b7280;"></div>
<svg style="position:absolute;left:1819.5px;top:1881.0px;overflow:visible;" width="37.5" height="37.5" viewBox="0 0 24 24"><g fill="none" stroke="#00c04f" stroke-width="2" stroke-linecap="round" stroke-linejoin="round"><path d="M12 5l0 14"/><path d="M18 11l-6 -6"/><path d="M6 11l6 -6"/></g></svg>
<div class="t" style="left:1866.0px;top:1878.2px;font-size:44px;line-height:44px;color:#00c04f;font-weight:400;letter-spacing:0px;-webkit-text-stroke:0.15px #00c04f">538</div>
<div class="t" style="left:154.0px;top:1953.5px;font-size:44px;line-height:44px;color:#030712;font-weight:400;letter-spacing:0.47px;">query counting seo</div>
<div class="t" style="left:774.0px;top:1965.0px;font-size:44px;line-height:44px;color:#030712;font-weight:400;letter-spacing:0px;">8</div>
<div class="t" style="left:982.0px;top:1965.0px;font-size:44px;line-height:44px;color:#030712;font-weight:400;letter-spacing:0px;">20</div>
<svg style="position:absolute;left:1188.2px;top:1967.8px;overflow:visible;" width="37.5" height="37.5" viewBox="0 0 24 24"><g fill="none" stroke="#ef4444" stroke-width="2" stroke-linecap="round" stroke-linejoin="round"><path d="M12 5l0 14"/><path d="M18 13l-6 6"/><path d="M6 13l6 6"/></g></svg>
<div class="t" style="left:1230.5px;top:1965.0px;font-size:44px;line-height:44px;color:#ef4444;font-weight:400;letter-spacing:0px;-webkit-text-stroke:0.15px #ef4444"><svg width="17.33" height="31.50" style="vertical-align:baseline;overflow:visible"><polygon points="8.03,0.00 14.33,0.00 14.33,31.50 9.84,31.50 9.84,4.41 2.52,9.58 2.52,4.41" fill="currentColor"/></svg>2</div>
<div class="t" style="left:1436.0px;top:1965.0px;font-size:44px;line-height:44px;color:#030712;font-weight:400;letter-spacing:0px;">88</div>
<div class="t" style="left:1629.0px;top:1965.0px;font-size:44px;line-height:44px;color:#030712;font-weight:400;letter-spacing:0px;"><svg width="17.33" height="31.50" style="vertical-align:baseline;overflow:visible"><polygon points="8.03,0.00 14.33,0.00 14.33,31.50 9.84,31.50 9.84,4.41 2.52,9.58 2.52,4.41" fill="currentColor"/></svg>46</div>
<svg style="position:absolute;left:1819.5px;top:1967.8px;overflow:visible;" width="37.5" height="37.5" viewBox="0 0 24 24"><g fill="none" stroke="#ef4444" stroke-width="2" stroke-linecap="round" stroke-linejoin="round"><path d="M12 5l0 14"/><path d="M18 13l-6 6"/><path d="M6 13l6 6"/></g></svg>
<div class="t" style="left:1866.0px;top:1965.0px;font-size:44px;line-height:44px;color:#ef4444;font-weight:400;letter-spacing:0px;-webkit-text-stroke:0.15px #ef4444">58</div>
<div class="t" style="left:154.0px;top:2040.2px;font-size:44px;line-height:44px;color:#030712;font-weight:400;letter-spacing:0.2px;">google search console app</div>
<div class="t" style="left:774.0px;top:2051.7px;font-size:44px;line-height:44px;color:#030712;font-weight:400;letter-spacing:0px;">5</div>
<div style="position:absolute;left:983.9px;top:2073.9px;width:13.0px;height:3.5px;background:#6b7280;"></div>
<svg style="position:absolute;left:1188.2px;top:2054.5px;overflow:visible;" width="37.5" height="37.5" viewBox="0 0 24 24"><g fill="none" stroke="#00c04f" stroke-width="2" stroke-linecap="round" stroke-linejoin="round"><path d="M12 5l0 14"/><path d="M18 11l-6 -6"/><path d="M6 11l6 -6"/></g></svg>
<div class="t" style="left:1230.5px;top:2051.7px;font-size:44px;line-height:44px;color:#00c04f;font-weight:400;letter-spacing:0px;-webkit-text-stroke:0.15px #00c04f">5</div>
<div class="t" style="left:1436.0px;top:2051.7px;font-size:44px;line-height:44px;color:#030712;font-weight:400;letter-spacing:0px;">350</div>
<div style="position:absolute;left:1630.9px;top:2073.9px;width:13.0px;height:3.5px;background:#6b7280;"></div>
<svg style="position:absolute;left:1819.5px;top:2054.5px;overflow:visible;" width="37.5" height="37.5" viewBox="0 0 24 24"><g fill="none" stroke="#00c04f" stroke-width="2" stroke-linecap="round" stroke-linejoin="round"><path d="M12 5l0 14"/><path d="M18 11l-6 -6"/><path d="M6 11l6 -6"/></g></svg>
<div class="t" style="left:1866.0px;top:2051.7px;font-size:44px;line-height:44px;color:#00c04f;font-weight:400;letter-spacing:0px;-webkit-text-stroke:0.15px #00c04f">350</div>
<div class="t" style="left:154.0px;top:2127.0px;font-size:44px;line-height:44px;color:#030712;font-weight:400;letter-spacing:0.35px;">keyword cannibalization tool</div>
<div class="t" style="left:774.0px;top:2138.5px;font-size:44px;line-height:44px;color:#030712;font-weight:400;letter-spacing:0px;">4</div>
<div style="position:absolute;left:983.9px;top:2160.7px;width:13.0px;height:3.5px;background:#6b7280;"></div>
<svg style="position:absolute;left:1188.2px;top:2141.2px;overflow:visible;" width="37.5" height="37.5" viewBox="0 0 24 24"><g fill="none" stroke="#00c04f" stroke-width="2" stroke-linecap="round" stroke-linejoin="round"><path d="M12 5l0 14"/><path d="M18 11l-6 -6"/><path d="M6 11l6 -6"/></g></svg>
<div class="t" style="left:1230.5px;top:2138.5px;font-size:44px;line-height:44px;color:#00c04f;font-weight:400;letter-spacing:0px;-webkit-text-stroke:0.15px #00c04f">4</div>
<div class="t" style="left:1436.0px;top:2138.5px;font-size:44px;line-height:44px;color:#030712;font-weight:400;letter-spacing:0px;">5.7k</div>
<div style="position:absolute;left:1630.9px;top:2160.7px;width:13.0px;height:3.5px;background:#6b7280;"></div>
<svg style="position:absolute;left:1819.5px;top:2141.2px;overflow:visible;" width="37.5" height="37.5" viewBox="0 0 24 24"><g fill="none" stroke="#00c04f" stroke-width="2" stroke-linecap="round" stroke-linejoin="round"><path d="M12 5l0 14"/><path d="M18 11l-6 -6"/><path d="M6 11l6 -6"/></g></svg>
<div class="t" style="left:1866.0px;top:2138.5px;font-size:44px;line-height:44px;color:#00c04f;font-weight:400;letter-spacing:0px;-webkit-text-stroke:0.15px #00c04f">5.7k</div>
<div class="t" style="left:154.0px;top:2213.7px;font-size:44px;line-height:44px;color:#030712;font-weight:400;letter-spacing:0.16px;">seo gets</div>
<svg style="position:absolute;left:336.3px;top:2214.0px;overflow:visible;" width="47" height="47" viewBox="0 0 24 24"><path d="M3.85 8.62a4 4 0 0 1 4.78-4.77 4 4 0 0 1 6.74 0 4 4 0 0 1 4.78 4.78 4 4 0 0 1 0 6.74 4 4 0 0 1-4.77 4.78 4 4 0 0 1-6.75 0 4 4 0 0 1-4.78-4.77 4 4 0 0 1 0-6.76Z" fill="none" stroke="#15803d" stroke-width="1.5"/><path d="M10.6 10.2l1.8-1.6v7" fill="none" stroke="#15803d" stroke-width="1.5" stroke-linecap="round" stroke-linejoin="round"/></svg>
<div class="t" style="left:774.0px;top:2225.2px;font-size:44px;line-height:44px;color:#030712;font-weight:400;letter-spacing:0px;">4</div>
<div class="t" style="left:982.0px;top:2225.2px;font-size:44px;line-height:44px;color:#030712;font-weight:400;letter-spacing:0px;">0</div>
<svg style="position:absolute;left:1188.2px;top:2228.0px;overflow:visible;" width="37.5" height="37.5" viewBox="0 0 24 24"><g fill="none" stroke="#00c04f" stroke-width="2" stroke-linecap="round" stroke-linejoin="round"><path d="M12 5l0 14"/><path d="M18 11l-6 -6"/><path d="M6 11l6 -6"/></g></svg>
<div class="t" style="left:1230.5px;top:2225.2px;font-size:44px;line-height:44px;color:#00c04f;font-weight:400;letter-spacing:0px;-webkit-text-stroke:0.15px #00c04f">4</div>
<div class="t" style="left:1436.0px;top:2225.2px;font-size:44px;line-height:44px;color:#030712;font-weight:400;letter-spacing:0px;">5.4k</div>
<div class="t" style="left:1629.0px;top:2225.2px;font-size:44px;line-height:44px;color:#030712;font-weight:400;letter-spacing:0px;">205</div>
<svg style="position:absolute;left:1819.5px;top:2228.0px;overflow:visible;" width="37.5" height="37.5" viewBox="0 0 24 24"><g fill="none" stroke="#00c04f" stroke-width="2" stroke-linecap="round" stroke-linejoin="round"><path d="M12 5l0 14"/><path d="M18 11l-6 -6"/><path d="M6 11l6 -6"/></g></svg>
<div class="t" style="left:1866.0px;top:2225.2px;font-size:44px;line-height:44px;color:#00c04f;font-weight:400;letter-spacing:0px;-webkit-text-stroke:0.15px #00c04f">5.2k</div>
<div class="t" style="left:154.0px;top:2300.5px;font-size:44px;line-height:44px;color:#030712;font-weight:400;letter-spacing:0.16px;">search console app</div>
<div class="t" style="left:774.0px;top:2312.0px;font-size:44px;line-height:44px;color:#030712;font-weight:400;letter-spacing:0px;">4</div>
<div style="position:absolute;left:983.9px;top:2334.2px;width:13.0px;height:3.5px;background:#6b7280;"></div>
<svg style="position:absolute;left:1188.2px;top:2314.8px;overflow:visible;" width="37.5" height="37.5" viewBox="0 0 24 24"><g fill="none" stroke="#00c04f" stroke-width="2" stroke-linecap="round" stroke-linejoin="round"><path d="M12 5l0 14"/><path d="M18 11l-6 -6"/><path d="M6 11l6 -6"/></g></svg>
<div class="t" style="left:1230.5px;top:2312.0px;font-size:44px;line-height:44px;color:#00c04f;font-weight:400;letter-spacing:0px;-webkit-text-stroke:0.15px #00c04f">4</div>
<div class="t" style="left:1436.0px;top:2312.0px;font-size:44px;line-height:44px;color:#030712;font-weight:400;letter-spacing:0px;">69</div>
<div style="position:absolute;left:1630.9px;top:2334.2px;width:13.0px;height:3.5px;background:#6b7280;"></div>
<svg style="position:absolute;left:1819.5px;top:2314.8px;overflow:visible;" width="37.5" height="37.5" viewBox="0 0 24 24"><g fill="none" stroke="#00c04f" stroke-width="2" stroke-linecap="round" stroke-linejoin="round"><path d="M12 5l0 14"/><path d="M18 11l-6 -6"/><path d="M6 11l6 -6"/></g></svg>
<div class="t" style="left:1866.0px;top:2312.0px;font-size:44px;line-height:44px;color:#00c04f;font-weight:400;letter-spacing:0px;-webkit-text-stroke:0.15px #00c04f">69</div>
<div class="t" style="left:2076.8px;top:1422.3px;font-size:46px;line-height:46px;color:#030712;font-weight:700;letter-spacing:0px;-webkit-text-stroke:0">Pages</div>
<div style="position:absolute;left:2075.8px;top:1537.0px;width:25.0px;height:25.0px;border-radius:50%;background:#3b82f6"></div>
<div class="t" style="left:2125.8px;top:1529.1px;font-size:43px;line-height:43px;color:#030712;font-weight:400;letter-spacing:0px;">Features</div>
<svg style="position:absolute;left:2342.6px;top:1534.3px;overflow:visible;" width="30.4" height="30.4" viewBox="0 0 30.4 30.4"><circle cx="15.2" cy="15.2" r="10.799999999999999" fill="none" stroke="#3b82f6" stroke-width="2.8" stroke-dasharray="11.20 5.77" transform="rotate(-100 15.2 15.2)"/></svg>
<div class="t" style="left:2394.8px;top:1529.1px;font-size:43px;line-height:43px;color:#030712;font-weight:400;letter-spacing:0px;">Blog Posts</div>
<div class="t" style="left:2086.8px;top:1624.5px;font-size:36px;line-height:36px;color:#6b7280;font-weight:700;letter-spacing:0px;-webkit-text-stroke:0">Page</div>
<div style="position:absolute;left:2708.0px;top:1630.0px;width:25.0px;height:25.0px;border-radius:50%;background:#3b82f6"></div>
<div class="t" style="left:2743.8px;top:1622.8px;font-size:38px;line-height:38px;color:#3b82f6;font-weight:400;letter-spacing:0px;-webkit-text-stroke:0.6px #3b82f6"><span style="text-decoration:underline;text-decoration-thickness:2.5px;text-underline-offset:5px">Clicks</span></div>
<svg style="position:absolute;left:2911.1px;top:1627.3px;overflow:visible;" width="30.4" height="30.4" viewBox="0 0 30.4 30.4"><circle cx="15.2" cy="15.2" r="10.799999999999999" fill="none" stroke="#3b82f6" stroke-width="2.8" stroke-dasharray="11.20 5.77" transform="rotate(-100 15.2 15.2)"/></svg>
<div class="t" style="left:2950.8px;top:1622.8px;font-size:38px;line-height:38px;color:#3b82f6;font-weight:400;letter-spacing:0px;-webkit-text-stroke:0.6px #3b82f6">Clicks</div>
<div class="t" style="left:3119.8px;top:1622.8px;font-size:38px;line-height:38px;color:#6b7280;font-weight:400;letter-spacing:0px;-webkit-text-stroke:0.8px #6b7280">Diff</div>
<div style="position:absolute;left:3368.0px;top:1630.0px;width:25.0px;height:25.0px;border-radius:50%;background:#8763d5"></div>
<div class="t" style="left:3404.8px;top:1622.8px;font-size:38px;line-height:38px;color:#8763d5;font-weight:400;letter-spacing:-0.6px;-webkit-text-stroke:0.6px #8763d5">Impre...</div>
<svg style="position:absolute;left:3558.8px;top:1627.3px;overflow:visible;" width="30.4" height="30.4" viewBox="0 0 30.4 30.4"><circle cx="15.2" cy="15.2" r="10.799999999999999" fill="none" stroke="#8763d5" stroke-width="2.8" stroke-dasharray="11.20 5.77" transform="rotate(-100 15.2 15.2)"/></svg>
<div class="t" style="left:3597.8px;top:1622.8px;font-size:38px;line-height:38px;color:#8763d5;font-weight:400;letter-spacing:-0.6px;-webkit-text-stroke:0.6px #8763d5">Impre...</div>
<div class="t" style="left:3752.8px;top:1622.8px;font-size:38px;line-height:38px;color:#6b7280;font-weight:400;letter-spacing:0px;-webkit-text-stroke:0.8px #6b7280">Diff</div>
<div style="position:absolute;left:2075.8px;top:1680.0px;width:1859.0px;height:2.5px;background:#e2e8f0;"></div>
<div style="position:absolute;left:3315.8px;top:1618.0px;width:2.5px;height:772.0px;background:#e2e8f0;"></div>
<div class="t" style="left:2087.8px;top:1693.2px;font-size:44px;line-height:44px;color:#030712;font-weight:400;letter-spacing:1.11px;">/features/how-to-extend-g...</div>
<div class="t" style="left:2707.8px;top:1704.7px;font-size:44px;line-height:44px;color:#030712;font-weight:400;letter-spacing:0px;">384</div>
<div style="position:absolute;left:2917.7px;top:1726.9px;width:13.0px;height:3.5px;background:#6b7280;"></div>
<svg style="position:absolute;left:3121.9px;top:1707.5px;overflow:visible;" width="37.5" height="37.5" viewBox="0 0 24 24"><g fill="none" stroke="#00c04f" stroke-width="2" stroke-linecap="round" stroke-linejoin="round"><path d="M12 5l0 14"/><path d="M18 11l-6 -6"/><path d="M6 11l6 -6"/></g></svg>
<div class="t" style="left:3164.2px;top:1704.7px;font-size:44px;line-height:44px;color:#00c04f;font-weight:400;letter-spacing:0px;-webkit-text-stroke:0.15px #00c04f">384</div>
<div class="t" style="left:3369.8px;top:1704.7px;font-size:44px;line-height:44px;color:#030712;font-weight:400;letter-spacing:0px;">3<svg width="17.33" height="31.50" style="vertical-align:baseline;overflow:visible"><polygon points="8.03,0.00 14.33,0.00 14.33,31.50 9.84,31.50 9.84,4.41 2.52,9.58 2.52,4.41" fill="currentColor"/></svg>k</div>
<div style="position:absolute;left:3564.7px;top:1726.9px;width:13.0px;height:3.5px;background:#6b7280;"></div>
<svg style="position:absolute;left:3753.2px;top:1707.5px;overflow:visible;" width="37.5" height="37.5" viewBox="0 0 24 24"><g fill="none" stroke="#00c04f" stroke-width="2" stroke-linecap="round" stroke-linejoin="round"><path d="M12 5l0 14"/><path d="M18 11l-6 -6"/><path d="M6 11l6 -6"/></g></svg>
<div class="t" style="left:3799.8px;top:1704.7px;font-size:44px;line-height:44px;color:#00c04f;font-weight:400;letter-spacing:0px;-webkit-text-stroke:0.15px #00c04f">3<svg width="17.33" height="31.50" style="vertical-align:baseline;overflow:visible"><polygon points="8.03,0.00 14.33,0.00 14.33,31.50 9.84,31.50 9.84,4.41 2.52,9.58 2.52,4.41" fill="currentColor"/></svg>k</div>
<div class="t" style="left:2087.8px;top:1780.0px;font-size:44px;line-height:44px;color:#030712;font-weight:400;letter-spacing:0.7px;">/features/annotations-goo...</div>
<div class="t" style="left:2707.8px;top:1791.5px;font-size:44px;line-height:44px;color:#030712;font-weight:400;letter-spacing:0px;"><svg width="17.33" height="31.50" style="vertical-align:baseline;overflow:visible"><polygon points="8.03,0.00 14.33,0.00 14.33,31.50 9.84,31.50 9.84,4.41 2.52,9.58 2.52,4.41" fill="currentColor"/></svg>97</div>
<div style="position:absolute;left:2917.7px;top:1813.7px;width:13.0px;height:3.5px;background:#6b7280;"></div>
<svg style="position:absolute;left:3121.9px;top:1794.2px;overflow:visible;" width="37.5" height="37.5" viewBox="0 0 24 24"><g fill="none" stroke="#00c04f" stroke-width="2" stroke-linecap="round" stroke-linejoin="round"><path d="M12 5l0 14"/><path d="M18 11l-6 -6"/><path d="M6 11l6 -6"/></g></svg>
<div class="t" style="left:3164.2px;top:1791.5px;font-size:44px;line-height:44px;color:#00c04f;font-weight:400;letter-spacing:0px;-webkit-text-stroke:0.15px #00c04f"><svg width="17.33" height="31.50" style="vertical-align:baseline;overflow:visible"><polygon points="8.03,0.00 14.33,0.00 14.33,31.50 9.84,31.50 9.84,4.41 2.52,9.58 2.52,4.41" fill="currentColor"/></svg>97</div>
<div class="t" style="left:3369.8px;top:1791.5px;font-size:44px;line-height:44px;color:#030712;font-weight:400;letter-spacing:0px;"><svg width="17.33" height="31.50" style="vertical-align:baseline;overflow:visible"><polygon points="8.03,0.00 14.33,0.00 14.33,31.50 9.84,31.50 9.84,4.41 2.52,9.58 2.52,4.41" fill="currentColor"/></svg>3.3k</div>
<div style="position:absolute;left:3564.7px;top:1813.7px;width:13.0px;height:3.5px;background:#6b7280;"></div>
<svg style="position:absolute;left:3753.2px;top:1794.2px;overflow:visible;" width="37.5" height="37.5" viewBox="0 0 24 24"><g fill="none" stroke="#00c04f" stroke-width="2" stroke-linecap="round" stroke-linejoin="round"><path d="M12 5l0 14"/><path d="M18 11l-6 -6"/><path d="M6 11l6 -6"/></g></svg>
<div class="t" style="left:3799.8px;top:1791.5px;font-size:44px;line-height:44px;color:#00c04f;font-weight:400;letter-spacing:0px;-webkit-text-stroke:0.15px #00c04f"><svg width="17.33" height="31.50" style="vertical-align:baseline;overflow:visible"><polygon points="8.03,0.00 14.33,0.00 14.33,31.50 9.84,31.50 9.84,4.41 2.52,9.58 2.52,4.41" fill="currentColor"/></svg>3.3k</div>
<div class="t" style="left:2087.8px;top:1866.7px;font-size:44px;line-height:44px;color:#030712;font-weight:400;letter-spacing:1.0px;">/features/query-counting-f...</div>
<div class="t" style="left:2707.8px;top:1878.2px;font-size:44px;line-height:44px;color:#030712;font-weight:400;letter-spacing:0px;"><svg width="17.33" height="31.50" style="vertical-align:baseline;overflow:visible"><polygon points="8.03,0.00 14.33,0.00 14.33,31.50 9.84,31.50 9.84,4.41 2.52,9.58 2.52,4.41" fill="currentColor"/></svg><svg width="17.33" height="31.50" style="vertical-align:baseline;overflow:visible"><polygon points="8.03,0.00 14.33,0.00 14.33,31.50 9.84,31.50 9.84,4.41 2.52,9.58 2.52,4.41" fill="currentColor"/></svg>0</div>
<div style="position:absolute;left:2917.7px;top:1900.4px;width:13.0px;height:3.5px;background:#6b7280;"></div>
<svg style="position:absolute;left:3121.9px;top:1881.0px;overflow:visible;" width="37.5" height="37.5" viewBox="0 0 24 24"><g fill="none" stroke="#00c04f" stroke-width="2" stroke-linecap="round" stroke-linejoin="round"><path d="M12 5l0 14"/><path d="M18 11l-6 -6"/><path d="M6 11l6 -6"/></g></svg>
<div class="t" style="left:3164.2px;top:1878.2px;font-size:44px;line-height:44px;color:#00c04f;font-weight:400;letter-spacing:0px;-webkit-text-stroke:0.15px #00c04f"><svg width="17.33" height="31.50" style="vertical-align:baseline;overflow:visible"><polygon points="8.03,0.00 14.33,0.00 14.33,31.50 9.84,31.50 9.84,4.41 2.52,9.58 2.52,4.41" fill="currentColor"/></svg><svg width="17.33" height="31.50" style="vertical-align:baseline;overflow:visible"><polygon points="8.03,0.00 14.33,0.00 14.33,31.50 9.84,31.50 9.84,4.41 2.52,9.58 2.52,4.41" fill="currentColor"/></svg>0</div>
<div class="t" style="left:3369.8px;top:1878.2px;font-size:44px;line-height:44px;color:#030712;font-weight:400;letter-spacing:0px;"><svg width="17.33" height="31.50" style="vertical-align:baseline;overflow:visible"><polygon points="8.03,0.00 14.33,0.00 14.33,31.50 9.84,31.50 9.84,4.41 2.52,9.58 2.52,4.41" fill="currentColor"/></svg>4.7k</div>
<div style="position:absolute;left:3564.7px;top:1900.4px;width:13.0px;height:3.5px;background:#6b7280;"></div>
<svg style="position:absolute;left:3753.2px;top:1881.0px;overflow:visible;" width="37.5" height="37.5" viewBox="0 0 24 24"><g fill="none" stroke="#00c04f" stroke-width="2" stroke-linecap="round" stroke-linejoin="round"><path d="M12 5l0 14"/><path d="M18 11l-6 -6"/><path d="M6 11l6 -6"/></g></svg>
<div class="t" style="left:3799.8px;top:1878.2px;font-size:44px;line-height:44px;color:#00c04f;font-weight:400;letter-spacing:0px;-webkit-text-stroke:0.15px #00c04f"><svg width="17.33" height="31.50" style="vertical-align:baseline;overflow:visible"><polygon points="8.03,0.00 14.33,0.00 14.33,31.50 9.84,31.50 9.84,4.41 2.52,9.58 2.52,4.41" fill="currentColor"/></svg>4.7k</div>
<div class="t" style="left:2087.8px;top:1953.5px;font-size:44px;line-height:44px;color:#030712;font-weight:400;letter-spacing:0.44px;">/features/</div>
<div class="t" style="left:2707.8px;top:1965.0px;font-size:44px;line-height:44px;color:#030712;font-weight:400;letter-spacing:0px;">76</div>
<div style="position:absolute;left:2917.7px;top:1987.2px;width:13.0px;height:3.5px;background:#6b7280;"></div>
<svg style="position:absolute;left:3121.9px;top:1967.8px;overflow:visible;" width="37.5" height="37.5" viewBox="0 0 24 24"><g fill="none" stroke="#00c04f" stroke-width="2" stroke-linecap="round" stroke-linejoin="round"><path d="M12 5l0 14"/><path d="M18 11l-6 -6"/><path d="M6 11l6 -6"/></g></svg>
<div class="t" style="left:3164.2px;top:1965.0px;font-size:44px;line-height:44px;color:#00c04f;font-weight:400;letter-spacing:0px;-webkit-text-stroke:0.15px #00c04f">76</div>
<div class="t" style="left:3369.8px;top:1965.0px;font-size:44px;line-height:44px;color:#030712;font-weight:400;letter-spacing:0px;">54.9k</div>
<div style="position:absolute;left:3564.7px;top:1987.2px;width:13.0px;height:3.5px;background:#6b7280;"></div>
<svg style="position:absolute;left:3753.2px;top:1967.8px;overflow:visible;" width="37.5" height="37.5" viewBox="0 0 24 24"><g fill="none" stroke="#00c04f" stroke-width="2" stroke-linecap="round" stroke-linejoin="round"><path d="M12 5l0 14"/><path d="M18 11l-6 -6"/><path d="M6 11l6 -6"/></g></svg>
<div class="t" style="left:3799.8px;top:1965.0px;font-size:44px;line-height:44px;color:#00c04f;font-weight:400;letter-spacing:0px;-webkit-text-stroke:0.15px #00c04f">54.9k</div>
<div class="t" style="left:2087.8px;top:2040.2px;font-size:44px;line-height:44px;color:#030712;font-weight:400;letter-spacing:0.96px;">/features/mobile-app-for-...</div>
<div class="t" style="left:2707.8px;top:2051.7px;font-size:44px;line-height:44px;color:#030712;font-weight:400;letter-spacing:0px;">57</div>
<div style="position:absolute;left:2917.7px;top:2073.9px;width:13.0px;height:3.5px;background:#6b7280;"></div>
<svg style="position:absolute;left:3121.9px;top:2054.5px;overflow:visible;" width="37.5" height="37.5" viewBox="0 0 24 24"><g fill="none" stroke="#00c04f" stroke-width="2" stroke-linecap="round" stroke-linejoin="round"><path d="M12 5l0 14"/><path d="M18 11l-6 -6"/><path d="M6 11l6 -6"/></g></svg>
<div class="t" style="left:3164.2px;top:2051.7px;font-size:44px;line-height:44px;color:#00c04f;font-weight:400;letter-spacing:0px;-webkit-text-stroke:0.15px #00c04f">57</div>
<div class="t" style="left:3369.8px;top:2051.7px;font-size:44px;line-height:44px;color:#030712;font-weight:400;letter-spacing:0px;">5.2k</div>
<div style="position:absolute;left:3564.7px;top:2073.9px;width:13.0px;height:3.5px;background:#6b7280;"></div>
<svg style="position:absolute;left:3753.2px;top:2054.5px;overflow:visible;" width="37.5" height="37.5" viewBox="0 0 24 24"><g fill="none" stroke="#00c04f" stroke-width="2" stroke-linecap="round" stroke-linejoin="round"><path d="M12 5l0 14"/><path d="M18 11l-6 -6"/><path d="M6 11l6 -6"/></g></svg>
<div class="t" style="left:3799.8px;top:2051.7px;font-size:44px;line-height:44px;color:#00c04f;font-weight:400;letter-spacing:0px;-webkit-text-stroke:0.15px #00c04f">5.2k</div>
<div class="t" style="left:2087.8px;top:2127.0px;font-size:44px;line-height:44px;color:#030712;font-weight:400;letter-spacing:0.81px;">/features/keyword-cannib...</div>
<div class="t" style="left:2707.8px;top:2138.5px;font-size:44px;line-height:44px;color:#030712;font-weight:400;letter-spacing:0px;">39</div>
<div style="position:absolute;left:2917.7px;top:2160.7px;width:13.0px;height:3.5px;background:#6b7280;"></div>
<svg style="position:absolute;left:3121.9px;top:2141.2px;overflow:visible;" width="37.5" height="37.5" viewBox="0 0 24 24"><g fill="none" stroke="#00c04f" stroke-width="2" stroke-linecap="round" stroke-linejoin="round"><path d="M12 5l0 14"/><path d="M18 11l-6 -6"/><path d="M6 11l6 -6"/></g></svg>
<div class="t" style="left:3164.2px;top:2138.5px;font-size:44px;line-height:44px;color:#00c04f;font-weight:400;letter-spacing:0px;-webkit-text-stroke:0.15px #00c04f">39</div>
<div class="t" style="left:3369.8px;top:2138.5px;font-size:44px;line-height:44px;color:#030712;font-weight:400;letter-spacing:0px;"><svg width="17.33" height="31.50" style="vertical-align:baseline;overflow:visible"><polygon points="8.03,0.00 14.33,0.00 14.33,31.50 9.84,31.50 9.84,4.41 2.52,9.58 2.52,4.41" fill="currentColor"/></svg>8.6k</div>
<div style="position:absolute;left:3564.7px;top:2160.7px;width:13.0px;height:3.5px;background:#6b7280;"></div>
<svg style="position:absolute;left:3753.2px;top:2141.2px;overflow:visible;" width="37.5" height="37.5" viewBox="0 0 24 24"><g fill="none" stroke="#00c04f" stroke-width="2" stroke-linecap="round" stroke-linejoin="round"><path d="M12 5l0 14"/><path d="M18 11l-6 -6"/><path d="M6 11l6 -6"/></g></svg>
<div class="t" style="left:3799.8px;top:2138.5px;font-size:44px;line-height:44px;color:#00c04f;font-weight:400;letter-spacing:0px;-webkit-text-stroke:0.15px #00c04f"><svg width="17.33" height="31.50" style="vertical-align:baseline;overflow:visible"><polygon points="8.03,0.00 14.33,0.00 14.33,31.50 9.84,31.50 9.84,4.41 2.52,9.58 2.52,4.41" fill="currentColor"/></svg>8.6k</div>
<div class="t" style="left:2087.8px;top:2213.7px;font-size:44px;line-height:44px;color:#030712;font-weight:400;letter-spacing:0.78px;">/features/branded-keywor...</div>
<div class="t" style="left:2707.8px;top:2225.2px;font-size:44px;line-height:44px;color:#030712;font-weight:400;letter-spacing:0px;">34</div>
<div style="position:absolute;left:2917.7px;top:2247.4px;width:13.0px;height:3.5px;background:#6b7280;"></div>
<svg style="position:absolute;left:3121.9px;top:2228.0px;overflow:visible;" width="37.5" height="37.5" viewBox="0 0 24 24"><g fill="none" stroke="#00c04f" stroke-width="2" stroke-linecap="round" stroke-linejoin="round"><path d="M12 5l0 14"/><path d="M18 11l-6 -6"/><path d="M6 11l6 -6"/></g></svg>
<div class="t" style="left:3164.2px;top:2225.2px;font-size:44px;line-height:44px;color:#00c04f;font-weight:400;letter-spacing:0px;-webkit-text-stroke:0.15px #00c04f">34</div>
<div class="t" style="left:3369.8px;top:2225.2px;font-size:44px;line-height:44px;color:#030712;font-weight:400;letter-spacing:0px;">65.9k</div>
<div style="position:absolute;left:3564.7px;top:2247.4px;width:13.0px;height:3.5px;background:#6b7280;"></div>
<svg style="position:absolute;left:3753.2px;top:2228.0px;overflow:visible;" width="37.5" height="37.5" viewBox="0 0 24 24"><g fill="none" stroke="#00c04f" stroke-width="2" stroke-linecap="round" stroke-linejoin="round"><path d="M12 5l0 14"/><path d="M18 11l-6 -6"/><path d="M6 11l6 -6"/></g></svg>
<div class="t" style="left:3799.8px;top:2225.2px;font-size:44px;line-height:44px;color:#00c04f;font-weight:400;letter-spacing:0px;-webkit-text-stroke:0.15px #00c04f">65.9k</div>
<div class="t" style="left:2087.8px;top:2300.5px;font-size:44px;line-height:44px;color:#030712;font-weight:400;letter-spacing:0.79px;">/features/content-groups/</div>
<div class="t" style="left:2707.8px;top:2312.0px;font-size:44px;line-height:44px;color:#030712;font-weight:400;letter-spacing:0px;">28</div>
<div style="position:absolute;left:2917.7px;top:2334.2px;width:13.0px;height:3.5px;background:#6b7280;"></div>
<svg style="position:absolute;left:3121.9px;top:2314.8px;overflow:visible;" width="37.5" height="37.5" viewBox="0 0 24 24"><g fill="none" stroke="#00c04f" stroke-width="2" stroke-linecap="round" stroke-linejoin="round"><path d="M12 5l0 14"/><path d="M18 11l-6 -6"/><path d="M6 11l6 -6"/></g></svg>
<div class="t" style="left:3164.2px;top:2312.0px;font-size:44px;line-height:44px;color:#00c04f;font-weight:400;letter-spacing:0px;-webkit-text-stroke:0.15px #00c04f">28</div>
<div class="t" style="left:3369.8px;top:2312.0px;font-size:44px;line-height:44px;color:#030712;font-weight:400;letter-spacing:0px;"><svg width="17.33" height="31.50" style="vertical-align:baseline;overflow:visible"><polygon points="8.03,0.00 14.33,0.00 14.33,31.50 9.84,31.50 9.84,4.41 2.52,9.58 2.52,4.41" fill="currentColor"/></svg>0.4k</div>
<div style="position:absolute;left:3564.7px;top:2334.2px;width:13.0px;height:3.5px;background:#6b7280;"></div>
<svg style="position:absolute;left:3753.2px;top:2314.8px;overflow:visible;" width="37.5" height="37.5" viewBox="0 0 24 24"><g fill="none" stroke="#00c04f" stroke-width="2" stroke-linecap="round" stroke-linejoin="round"><path d="M12 5l0 14"/><path d="M18 11l-6 -6"/><path d="M6 11l6 -6"/></g></svg>
<div class="t" style="left:3799.8px;top:2312.0px;font-size:44px;line-height:44px;color:#00c04f;font-weight:400;letter-spacing:0px;-webkit-text-stroke:0.15px #00c04f"><svg width="17.33" height="31.50" style="vertical-align:baseline;overflow:visible"><polygon points="8.03,0.00 14.33,0.00 14.33,31.50 9.84,31.50 9.84,4.41 2.52,9.58 2.52,4.41" fill="currentColor"/></svg>0.4k</div>
<script>(function(){var w=window.innerWidth;if(w&&Math.abs(w-4000)>2){var k=w/4000;document.body.style.transformOrigin='0 0';document.body.style.transform='scale('+k+')';}})();</script>
</body></html>
